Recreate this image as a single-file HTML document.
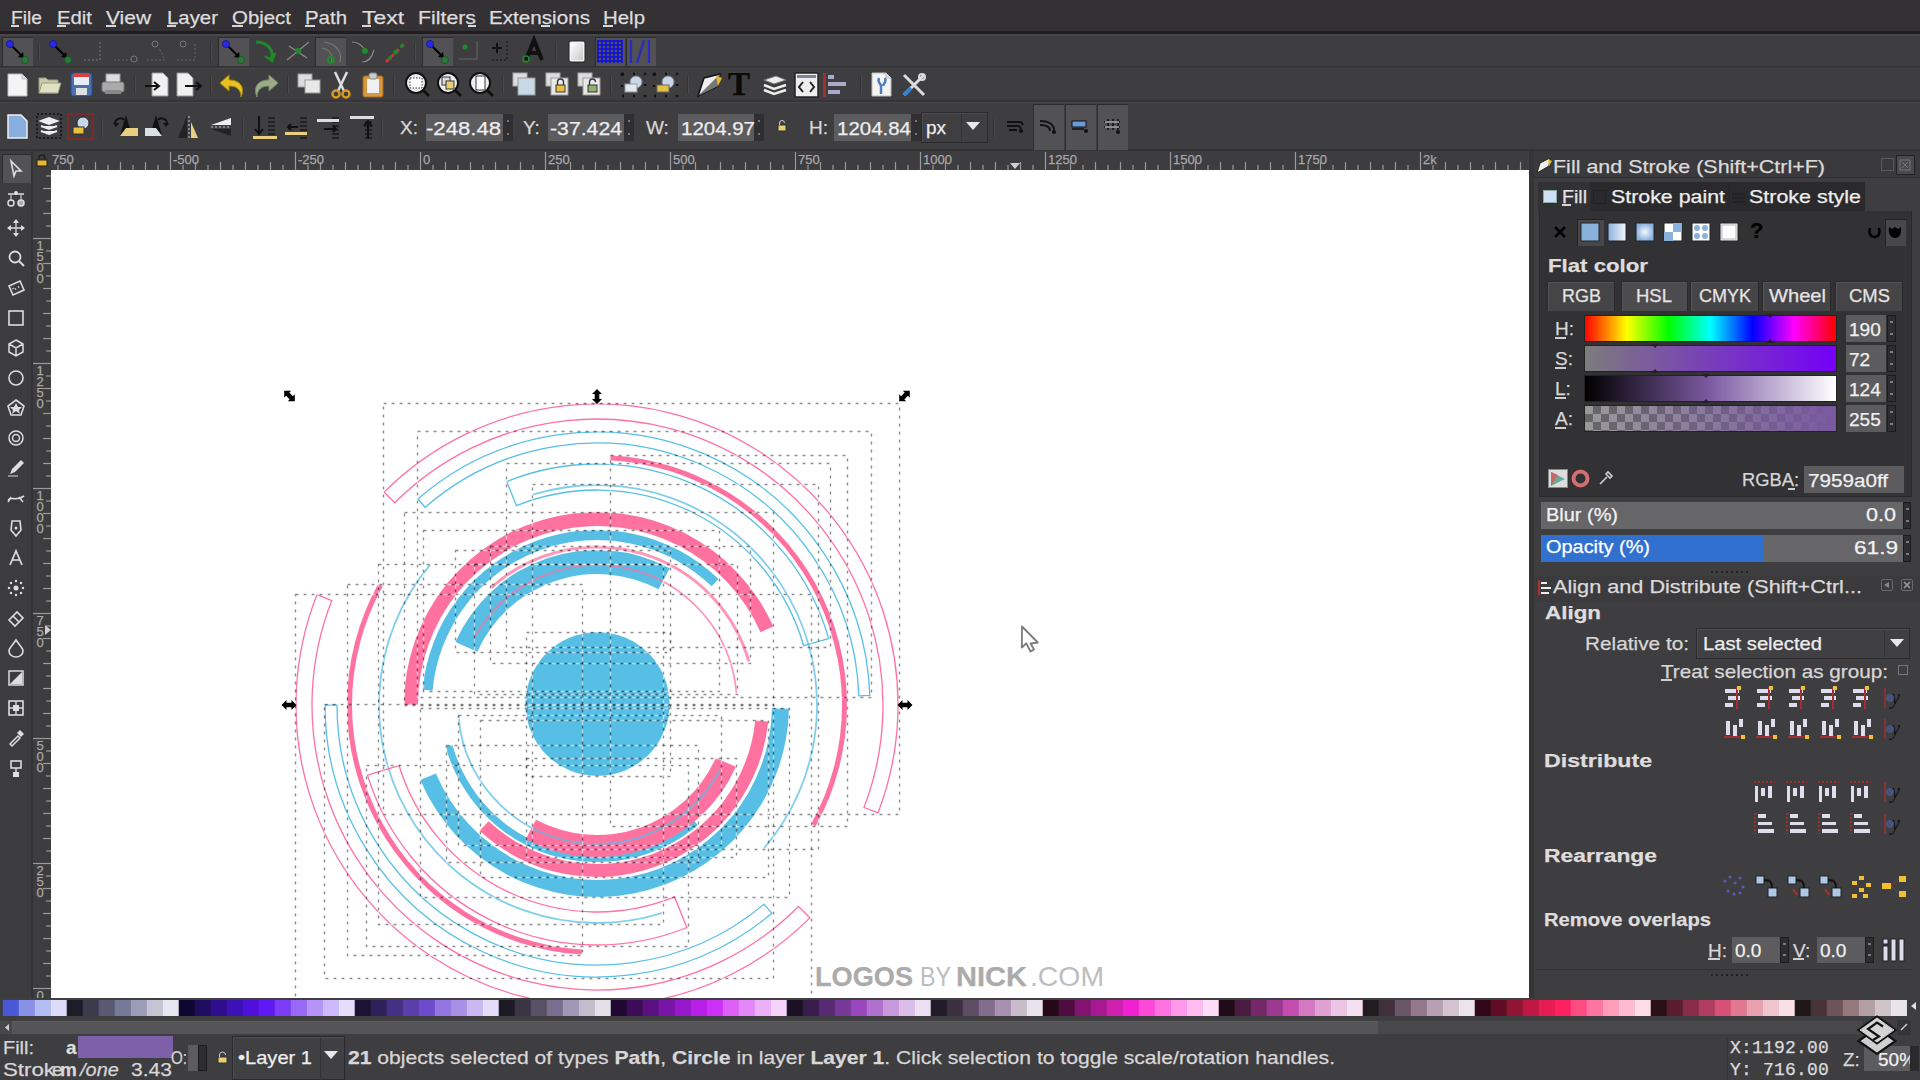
<!DOCTYPE html><html><head><meta charset="utf-8"><style>
*{margin:0;padding:0;box-sizing:border-box}
html,body{width:1920px;height:1080px;overflow:hidden;background:#3e3d40;font-family:"Liberation Sans",sans-serif;color:#dcdcdc}
.a{position:absolute}
.t{position:absolute;white-space:nowrap;line-height:1;-webkit-text-stroke:0.25px currentColor}
svg{position:absolute;overflow:visible}
</style></head><body><div id="root" style="position:absolute;left:0;top:0;width:1920px;height:1080px;overflow:hidden">
<div class="a" style="left:0px;top:0px;width:1920px;height:33px;background:#333134;"></div><div class="a" style="left:0px;top:31px;width:1920px;height:3px;background:#1f1d20;"></div><div class="a" style="left:0px;top:34px;width:1920px;height:2px;background:#464548;"></div><div class="t" style="left:11px;top:7.5px;font-size:19px;color:#dedcdc;font-weight:normal;transform:scaleX(1.0125);transform-origin:0 0;">File</div><div class="t" style="left:57px;top:7.5px;font-size:19px;color:#dedcdc;font-weight:normal;transform:scaleX(1.0690);transform-origin:0 0;">Edit</div><div class="t" style="left:106px;top:7.5px;font-size:19px;color:#dedcdc;font-weight:normal;transform:scaleX(1.1018);transform-origin:0 0;">View</div><div class="t" style="left:167px;top:7.5px;font-size:19px;color:#dedcdc;font-weight:normal;transform:scaleX(1.0730);transform-origin:0 0;">Layer</div><div class="t" style="left:232px;top:7.5px;font-size:19px;color:#dedcdc;font-weight:normal;transform:scaleX(1.0744);transform-origin:0 0;">Object</div><div class="t" style="left:305px;top:7.5px;font-size:19px;color:#dedcdc;font-weight:normal;transform:scaleX(1.0745);transform-origin:0 0;">Path</div><div class="t" style="left:362px;top:7.5px;font-size:19px;color:#dedcdc;font-weight:normal;transform:scaleX(1.2053);transform-origin:0 0;">Text</div><div class="t" style="left:418px;top:7.5px;font-size:19px;color:#dedcdc;font-weight:normal;transform:scaleX(1.1214);transform-origin:0 0;">Filters</div><div class="t" style="left:489px;top:7.5px;font-size:19px;color:#dedcdc;font-weight:normal;transform:scaleX(1.0867);transform-origin:0 0;">Extensions</div><div class="t" style="left:603px;top:7.5px;font-size:19px;color:#dedcdc;font-weight:normal;transform:scaleX(1.0748);transform-origin:0 0;">Help</div><div class="a" style="left:11px;top:25px;width:8px;height:2px;background:#d8d6d6;"></div><div class="a" style="left:57px;top:25px;width:9px;height:2px;background:#d8d6d6;"></div><div class="a" style="left:106px;top:25px;width:10px;height:2px;background:#d8d6d6;"></div><div class="a" style="left:167px;top:25px;width:9px;height:2px;background:#d8d6d6;"></div><div class="a" style="left:232px;top:25px;width:11px;height:2px;background:#d8d6d6;"></div><div class="a" style="left:305px;top:25px;width:10px;height:2px;background:#d8d6d6;"></div><div class="a" style="left:362px;top:25px;width:9px;height:2px;background:#d8d6d6;"></div><div class="a" style="left:468px;top:25px;width:8px;height:2px;background:#d8d6d6;"></div><div class="a" style="left:541px;top:25px;width:9px;height:2px;background:#d8d6d6;"></div><div class="a" style="left:603px;top:25px;width:10px;height:2px;background:#d8d6d6;"></div><div class="a" style="left:0px;top:66px;width:1920px;height:2px;background:#353436;"></div><div class="a" style="left:0px;top:68px;width:1920px;height:1px;background:#464548;"></div><div class="a" style="left:0px;top:100px;width:1920px;height:2px;background:#353436;"></div><div class="a" style="left:0px;top:102px;width:1920px;height:1px;background:#464548;"></div><div class="a" style="left:0px;top:149px;width:1920px;height:2px;background:#333235;"></div><div class="a" style="left:2px;top:37px;width:31px;height:29px;background:#525154;border-top:1px solid #2c2b2e;border-left:1px solid #2c2b2e;"></div><svg style="left:5px;top:39px;" width="26" height="26" viewBox="0 0 26 26"><line x1="5" y1="5" x2="17" y2="17" stroke="#000" stroke-width="2"/><path d="M13 18 L19 19 L18 13z" fill="#000"/><circle cx="5" cy="5" r="3.5" fill="#2a2ae0" stroke="#1818a0"/><circle cx="20" cy="21" r="3.5" fill="#2a7a3a" stroke="#1a5a2a"/></svg><div class="a" style="left:38px;top:42px;width:1px;height:20px;background:#333235;"></div><div class="a" style="left:39px;top:42px;width:1px;height:20px;background:#4a494c;"></div><svg style="left:48px;top:39px;" width="26" height="26" viewBox="0 0 26 26"><line x1="5" y1="5" x2="17" y2="17" stroke="#000" stroke-width="2"/><path d="M13 18 L19 19 L18 13z" fill="#000"/><circle cx="5" cy="5" r="3.5" fill="#2a2ae0" stroke="#1818a0"/><circle cx="20" cy="21" r="3.5" fill="#2a7a3a" stroke="#1a5a2a"/></svg><svg style="left:80px;top:40px;" width="24" height="24" viewBox="0 0 24 24"><path d="M20 2 V20 H2" stroke="#777" stroke-width="1" stroke-dasharray="2 2" fill="none"/></svg><svg style="left:112px;top:40px;" width="28" height="24" viewBox="0 0 28 24"><path d="M2 20 H22" stroke="#666" stroke-dasharray="2 2"/><circle cx="22" cy="19" r="3" fill="none" stroke="#777"/></svg><svg style="left:145px;top:38px;" width="24" height="26" viewBox="0 0 24 26"><circle cx="10" cy="6" r="3" fill="none" stroke="#777"/><path d="M2 22 H20 L14 10" stroke="#666" stroke-dasharray="2 2" fill="none"/></svg><svg style="left:175px;top:38px;" width="24" height="26" viewBox="0 0 24 26"><circle cx="8" cy="6" r="3" fill="none" stroke="#777"/><path d="M2 22 H20 V6" stroke="#666" stroke-dasharray="2 2" fill="none"/></svg><div class="a" style="left:210px;top:42px;width:1px;height:20px;background:#333235;"></div><div class="a" style="left:211px;top:42px;width:1px;height:20px;background:#4a494c;"></div><div class="a" style="left:218px;top:37px;width:31px;height:29px;background:#525154;border-top:1px solid #2c2b2e;border-left:1px solid #2c2b2e;"></div><svg style="left:221px;top:39px;" width="26" height="26" viewBox="0 0 26 26"><line x1="5" y1="5" x2="17" y2="17" stroke="#000" stroke-width="2"/><path d="M13 18 L19 19 L18 13z" fill="#000"/><circle cx="5" cy="5" r="3.5" fill="#2a2ae0" stroke="#1818a0"/><circle cx="20" cy="21" r="3.5" fill="#2a7a3a" stroke="#1a5a2a"/></svg><svg style="left:253px;top:38px;" width="26" height="26" viewBox="0 0 26 26"><path d="M3 4 C14 4 22 12 18 22" stroke="#1f8a2a" stroke-width="3" fill="none"/><path d="M12 18 L19 23 L22 15" stroke="#1f8a2a" stroke-width="2.5" fill="none"/></svg><svg style="left:285px;top:38px;" width="26" height="26" viewBox="0 0 26 26"><path d="M2 22 L24 4 M4 8 L22 20" stroke="#8a8a8a" stroke-width="1.2" fill="none"/><circle cx="13" cy="13" r="3" fill="#1f8a2a"/></svg><div class="a" style="left:315px;top:37px;width:31px;height:29px;background:#525154;border-top:1px solid #2c2b2e;border-left:1px solid #2c2b2e;"></div><svg style="left:318px;top:38px;" width="26" height="26" viewBox="0 0 26 26"><path d="M6 4 C20 6 24 16 22 24 M4 10 C14 12 16 20 12 26" stroke="#777" stroke-width="1.2" fill="none"/><circle cx="13" cy="22" r="3" fill="none" stroke="#1f8a2a" stroke-width="2"/></svg><svg style="left:350px;top:38px;" width="26" height="26" viewBox="0 0 26 26"><path d="M2 4 C10 4 14 10 16 14 M24 12 C22 20 18 24 12 24" stroke="#8a8a8a" stroke-width="1.2" fill="none"/><circle cx="15" cy="13" r="3" fill="#1f8a2a"/></svg><svg style="left:382px;top:38px;" width="26" height="26" viewBox="0 0 26 26"><path d="M4 24 L24 4" stroke="#d03030" stroke-width="3" stroke-dasharray="4 3" fill="none"/><circle cx="14" cy="14" r="2.5" fill="#1f8a2a"/><circle cx="8" cy="20" r="2" fill="#1f8a2a"/><circle cx="20" cy="8" r="2" fill="#1f8a2a"/></svg><div class="a" style="left:414px;top:42px;width:1px;height:20px;background:#333235;"></div><div class="a" style="left:415px;top:42px;width:1px;height:20px;background:#4a494c;"></div><div class="a" style="left:422px;top:37px;width:31px;height:29px;background:#525154;border-top:1px solid #2c2b2e;border-left:1px solid #2c2b2e;"></div><svg style="left:425px;top:39px;" width="26" height="26" viewBox="0 0 26 26"><line x1="5" y1="5" x2="17" y2="17" stroke="#000" stroke-width="2"/><path d="M13 18 L19 19 L18 13z" fill="#000"/><circle cx="5" cy="5" r="3.5" fill="#2a2ae0" stroke="#1818a0"/><circle cx="20" cy="21" r="3.5" fill="#2a7a3a" stroke="#1a5a2a"/></svg><svg style="left:457px;top:39px;" width="22" height="22" viewBox="0 0 22 22"><path d="M20 2 V20 H2" stroke="#666" fill="none"/><circle cx="8" cy="8" r="2.5" fill="#1f8a2a"/></svg><svg style="left:489px;top:39px;" width="22" height="24" viewBox="0 0 22 24"><path d="M3 9 H13 M8 4 V14" stroke="#111" stroke-width="2"/><path d="M18 2 V21 H2" stroke="#111" stroke-dasharray="2 2" fill="none"/></svg><svg style="left:522px;top:38px;" width="26" height="26" viewBox="0 0 26 26"><path d="M4 22 L12 2 L20 22 M7 15 H17" stroke="#111" stroke-width="4" fill="none"/><circle cx="4" cy="21" r="3" fill="none" stroke="#1f8a2a" stroke-width="1.5"/></svg><div class="a" style="left:555px;top:42px;width:1px;height:20px;background:#333235;"></div><div class="a" style="left:556px;top:42px;width:1px;height:20px;background:#4a494c;"></div><svg style="left:568px;top:40px;" width="18" height="23" viewBox="0 0 18 23"><rect x="1" y="1" width="16" height="21" rx="2" fill="#f2f2f2" stroke="#222"/><rect x="3" y="3" width="12" height="17" fill="url(#pg)"/><defs><linearGradient id="pg" x1="0" y1="0" x2="1" y2="1"><stop offset="0" stop-color="#fff"/><stop offset="1" stop-color="#c8c8c8"/></linearGradient></defs></svg><div class="a" style="left:595px;top:37px;width:30px;height:29px;background:#525154;border-top:1px solid #2c2b2e;border-left:1px solid #2c2b2e;"></div><svg style="left:597px;top:40px;" width="25" height="23" viewBox="0 0 25 23"><line x1="1" y1="0" x2="1" y2="23" stroke="#1010e0" stroke-width="1.6"/><line x1="5" y1="0" x2="5" y2="23" stroke="#1010e0" stroke-width="1.6"/><line x1="9" y1="0" x2="9" y2="23" stroke="#1010e0" stroke-width="1.6"/><line x1="13" y1="0" x2="13" y2="23" stroke="#1010e0" stroke-width="1.6"/><line x1="17" y1="0" x2="17" y2="23" stroke="#1010e0" stroke-width="1.6"/><line x1="21" y1="0" x2="21" y2="23" stroke="#1010e0" stroke-width="1.6"/><line x1="25" y1="0" x2="25" y2="23" stroke="#1010e0" stroke-width="1.6"/><line x1="0" y1="1" x2="25" y2="1" stroke="#1010e0" stroke-width="1.6"/><line x1="0" y1="5" x2="25" y2="5" stroke="#1010e0" stroke-width="1.6"/><line x1="0" y1="9" x2="25" y2="9" stroke="#1010e0" stroke-width="1.6"/><line x1="0" y1="13" x2="25" y2="13" stroke="#1010e0" stroke-width="1.6"/><line x1="0" y1="17" x2="25" y2="17" stroke="#1010e0" stroke-width="1.6"/><line x1="0" y1="21" x2="25" y2="21" stroke="#1010e0" stroke-width="1.6"/></svg><div class="a" style="left:626px;top:37px;width:30px;height:29px;background:#525154;border-top:1px solid #2c2b2e;border-left:1px solid #2c2b2e;"></div><svg style="left:628px;top:40px;" width="26" height="23" viewBox="0 0 26 23"><path d="M3 0 V23 M21 0 V23 M16 0 L9 23" stroke="#2a2ac0" stroke-width="2.2"/></svg><svg style="left:7px;top:73px;" width="21" height="24" viewBox="0 0 21 24"><path d="M1 1 H15 L20 6 V23 H1z" fill="#f4f4f4" stroke="#bbb"/><path d="M15 1 V6 H20" fill="#ddd" stroke="#bbb"/></svg><svg style="left:38px;top:74px;" width="23" height="21" viewBox="0 0 23 21"><path d="M1 4 H8 L10 6 H20 V19 H1z" fill="#c9c9a8" stroke="#9a9a80"/><path d="M1 19 L4 9 H23 L20 19z" fill="#e0e0c4" stroke="#9a9a80"/></svg><svg style="left:70px;top:72px;" width="23" height="25" viewBox="0 0 23 25"><rect x="1" y="1" width="21" height="23" rx="2" fill="#4a70b0" stroke="#2a4a80"/><rect x="4" y="1" width="15" height="4" fill="#d84040"/><rect x="4" y="5" width="15" height="8" fill="#e8eef8"/><rect x="6" y="16" width="11" height="7" fill="#e0e0e0"/></svg><svg style="left:101px;top:73px;" width="24" height="23" viewBox="0 0 24 23"><rect x="5" y="1" width="14" height="9" fill="#ddd" stroke="#999"/><rect x="1" y="9" width="22" height="10" rx="2" fill="#aaa" stroke="#777"/><rect x="4" y="17" width="16" height="4" fill="#888"/></svg><div class="a" style="left:134px;top:76px;width:1px;height:18px;background:#333235;"></div><div class="a" style="left:135px;top:76px;width:1px;height:18px;background:#4a494c;"></div><svg style="left:144px;top:72px;" width="26" height="25" viewBox="0 0 26 25"><path d="M8 1 H19 L24 6 V24 H8z" fill="#f0f0f0" stroke="#999"/><path d="M1 14 H14 M10 10 L15 14 L10 18" stroke="#111" stroke-width="2" fill="none"/></svg><svg style="left:176px;top:72px;" width="26" height="25" viewBox="0 0 26 25"><path d="M1 1 H12 L17 6 V24 H1z" fill="#f0f0f0" stroke="#999"/><path d="M9 14 H24 M20 10 L25 14 L20 18" stroke="#111" stroke-width="2" fill="none"/></svg><div class="a" style="left:210px;top:76px;width:1px;height:18px;background:#333235;"></div><div class="a" style="left:211px;top:76px;width:1px;height:18px;background:#4a494c;"></div><svg style="left:219px;top:72px;" width="27" height="27" viewBox="0 0 27 27"><path d="M10 3 L1 11 L10 19 V14 C17 14 22 17 22 25 C26 16 22 8 10 8z" fill="#e8c020" stroke="#a88a10"/></svg><svg style="left:252px;top:72px;" width="27" height="27" viewBox="0 0 27 27"><path d="M17 3 L26 11 L17 19 V14 C10 14 5 17 5 25 C1 16 5 8 17 8z" fill="#9aac88" stroke="#7a8a6a"/></svg><div class="a" style="left:287px;top:76px;width:1px;height:18px;background:#333235;"></div><div class="a" style="left:288px;top:76px;width:1px;height:18px;background:#4a494c;"></div><svg style="left:297px;top:73px;" width="25" height="22" viewBox="0 0 25 22"><rect x="1" y="1" width="14" height="13" fill="#ddd" stroke="#999"/><rect x="8" y="7" width="15" height="13" fill="#e8e8e8" stroke="#999"/></svg><svg style="left:331px;top:71px;" width="20" height="28" viewBox="0 0 20 28"><path d="M4 1 L13 20 M16 1 L7 20" stroke="#ddd" stroke-width="2.5"/><circle cx="5" cy="23" r="3.5" fill="none" stroke="#d89a20" stroke-width="2.5"/><circle cx="15" cy="23" r="3.5" fill="none" stroke="#d89a20" stroke-width="2.5"/></svg><svg style="left:362px;top:72px;" width="22" height="26" viewBox="0 0 22 26"><rect x="1" y="4" width="20" height="21" rx="2" fill="#d89840" stroke="#a86a20"/><rect x="5" y="7" width="12" height="14" fill="#f0f0f0"/><rect x="7" y="1" width="8" height="6" rx="2" fill="#ccc" stroke="#888"/></svg><div class="a" style="left:393px;top:76px;width:1px;height:18px;background:#333235;"></div><div class="a" style="left:394px;top:76px;width:1px;height:18px;background:#4a494c;"></div><svg style="left:405px;top:72px;" width="26" height="26" viewBox="0 0 26 26"><circle cx="11" cy="11" r="10" fill="#eee" stroke="#111" stroke-width="2"/><rect x="5" y="6" width="12" height="10" fill="#fff" stroke="#333" stroke-dasharray="1.5 1.5"/><path d="M18 18 L24 24" stroke="#111" stroke-width="3"/></svg><svg style="left:437px;top:72px;" width="26" height="26" viewBox="0 0 26 26"><circle cx="11" cy="11" r="10" fill="#eee" stroke="#111" stroke-width="2"/><rect x="5" y="5" width="8" height="8" fill="#ddd" stroke="#333"/><rect x="9" y="9" width="8" height="8" fill="#e8d070" stroke="#333"/><path d="M18 18 L24 24" stroke="#111" stroke-width="3"/></svg><svg style="left:469px;top:72px;" width="26" height="26" viewBox="0 0 26 26"><circle cx="11" cy="11" r="10" fill="#eee" stroke="#111" stroke-width="2"/><rect x="7" y="4" width="9" height="14" fill="#fff" stroke="#333"/><path d="M18 18 L24 24" stroke="#111" stroke-width="3"/></svg><div class="a" style="left:502px;top:76px;width:1px;height:18px;background:#333235;"></div><div class="a" style="left:503px;top:76px;width:1px;height:18px;background:#4a494c;"></div><svg style="left:512px;top:72px;" width="25" height="25" viewBox="0 0 25 25"><rect x="1" y="1" width="14" height="13" fill="#ddd" stroke="#aaa"/><rect x="6" y="6" width="17" height="17" fill="#c8d8e8" stroke="#999"/></svg><svg style="left:545px;top:72px;" width="25" height="25" viewBox="0 0 25 25"><rect x="1" y="1" width="14" height="13" fill="#ddd" stroke="#aaa"/><rect x="6" y="6" width="17" height="17" fill="#e8e8e8" stroke="#999"/><rect x="11" y="13" width="9" height="7" fill="#e8c040" stroke="#333"/><path d="M12.5 13 V10 a3 3 0 0 1 6 0 V13" fill="none" stroke="#333" stroke-width="1.3"/></svg><svg style="left:577px;top:72px;" width="25" height="25" viewBox="0 0 25 25"><rect x="1" y="1" width="14" height="13" fill="#ddd" stroke="#aaa"/><rect x="6" y="6" width="17" height="17" fill="#e8e8e8" stroke="#999"/><rect x="11" y="13" width="9" height="7" fill="#90b070" stroke="#333"/><path d="M12.5 13 V10 a3 3 0 0 1 6 0" fill="none" stroke="#333" stroke-width="1.3"/></svg><div class="a" style="left:610px;top:76px;width:1px;height:18px;background:#333235;"></div><div class="a" style="left:611px;top:76px;width:1px;height:18px;background:#4a494c;"></div><svg style="left:620px;top:72px;" width="27" height="26" viewBox="0 0 27 26"><path d="M2 2 H25 V24 H2z" fill="none" stroke="#111" stroke-width="2.5" stroke-dasharray="2 9"/><circle cx="16" cy="10" r="6" fill="#c8d8e8" stroke="#888"/><rect x="5" y="12" width="12" height="8" fill="#e0e8f0" stroke="#999"/></svg><svg style="left:652px;top:72px;" width="27" height="26" viewBox="0 0 27 26"><path d="M2 2 H25 V24 H2z" fill="none" stroke="#111" stroke-width="2.5" stroke-dasharray="2 9"/><circle cx="16" cy="10" r="6" fill="#c8d8e8" stroke="#888"/><rect x="5" y="13" width="12" height="7" fill="#e8c040" stroke="#666"/></svg><div class="a" style="left:687px;top:76px;width:1px;height:18px;background:#333235;"></div><div class="a" style="left:688px;top:76px;width:1px;height:18px;background:#4a494c;"></div><svg style="left:696px;top:72px;" width="27" height="26" viewBox="0 0 27 26"><path d="M2 24 L8 6 L24 2 L22 14z" fill="#eee" stroke="#111" stroke-width="1.5"/><path d="M2 24 L22 14 L24 2" fill="#777"/><path d="M20 4 L26 6 L22 14z" fill="#e8b820"/></svg><div class="t" style="left:728px;top:68px;font-size:33px;font-family:'Liberation Serif',serif;color:#0a0a0a;font-weight:bold">T</div><svg style="left:762px;top:74px;" width="25" height="22" viewBox="0 0 25 22"><path d="M2 6 L14 2 L24 6 L12 10z" fill="#eee" stroke="#777"/><path d="M2 11 L12 15 L24 11" fill="none" stroke="#eee" stroke-width="2.5"/><path d="M2 16 L12 20 L24 16" fill="none" stroke="#eee" stroke-width="2.5"/></svg><svg style="left:794px;top:72px;" width="25" height="26" viewBox="0 0 25 26"><rect x="1" y="1" width="23" height="24" fill="#eee" stroke="#222" stroke-width="1.5"/><rect x="3" y="3" width="19" height="3" fill="#789"/><path d="M9 10 L5 15 L9 20 M16 10 L20 15 L16 20" stroke="#222" stroke-width="2" fill="none"/></svg><svg style="left:822px;top:72px;" width="27" height="26" viewBox="0 0 27 26"><rect x="1" y="1" width="3" height="24" fill="#a03030"/><rect x="6" y="3" width="6" height="4" fill="#aac" /><rect x="6" y="10" width="18" height="4" fill="#aac"/><rect x="6" y="18" width="12" height="4" fill="#aac"/></svg><div class="a" style="left:860px;top:76px;width:1px;height:18px;background:#333235;"></div><div class="a" style="left:861px;top:76px;width:1px;height:18px;background:#4a494c;"></div><svg style="left:871px;top:72px;" width="22" height="26" viewBox="0 0 22 26"><path d="M1 1 H15 L20 6 V24 H1z" fill="#f4f4f4" stroke="#bbb"/><path d="M15 1 V6 H20" fill="#ddd" stroke="#bbb"/><path d="M8 6 C6 10 10 12 10 14 V22 M14 6 C16 10 12 12 12 14" stroke="#4a80c0" stroke-width="2.5" fill="none"/></svg><svg style="left:901px;top:72px;" width="26" height="26" viewBox="0 0 26 26"><path d="M3 3 L23 23 M23 3 L3 23" stroke="#ddd" stroke-width="3"/><path d="M3 23 L10 16" stroke="#3a80d0" stroke-width="4"/><circle cx="21" cy="5" r="3" fill="none" stroke="#ddd" stroke-width="2"/></svg><svg style="left:7px;top:114px;" width="21" height="25" viewBox="0 0 21 25"><path d="M1 1 H14 L20 7 V24 H1z" fill="#88aee0" stroke="#eee" stroke-width="1.5"/></svg><svg style="left:36px;top:113px;" width="26" height="26" viewBox="0 0 26 26"><rect x="1" y="1" width="24" height="24" fill="none" stroke="#111" stroke-width="1.5" stroke-dasharray="2 2"/><path d="M5 8 L13 5 L21 8 L13 11z M5 13 L13 16 L21 13 M5 18 L13 21 L21 18" fill="#eee" stroke="#eee" stroke-width="2"/></svg><svg style="left:67px;top:113px;" width="27" height="27" viewBox="0 0 27 27"><rect x="1" y="1" width="25" height="25" fill="none" stroke="#7a2a2a" stroke-width="2"/><circle cx="16" cy="10" r="6" fill="#c8d8e8" stroke="#333"/><rect x="6" y="14" width="11" height="7" fill="#e8c040" stroke="#333"/></svg><div class="a" style="left:101px;top:118px;width:1px;height:20px;background:#333235;"></div><div class="a" style="left:102px;top:118px;width:1px;height:20px;background:#4a494c;"></div><svg style="left:112px;top:114px;" width="27" height="26" viewBox="0 0 27 26"><path d="M14 1 L8 22 H20z" fill="#111"/><path d="M14 14 L26 14 L26 22 L8 22z" fill="#e8d080"/><path d="M3 10 C3 4 10 3 12 6" stroke="#111" stroke-width="2" fill="none"/><path d="M1 9 L4 13 L7 9" fill="#111"/></svg><svg style="left:144px;top:114px;" width="27" height="26" viewBox="0 0 27 26"><path d="M12 1 L18 22 H6z" fill="#111"/><path d="M12 14 L1 14 L1 22 L18 22z" fill="#d8e0e8"/><path d="M23 10 C23 4 16 3 14 6" stroke="#111" stroke-width="2" fill="none"/><path d="M19 9 L22 13 L25 9" fill="#111"/></svg><svg style="left:177px;top:114px;" width="22" height="26" viewBox="0 0 22 26"><path d="M10 2 V24 L1 24z" fill="#222"/><path d="M12 2 V24" stroke="#ccc" stroke-dasharray="2 2"/><path d="M14 8 L21 24 H14z" fill="#e8d080"/></svg><svg style="left:209px;top:116px;" width="24" height="22" viewBox="0 0 24 22"><path d="M22 2 L2 9 H22z" fill="#eee"/><path d="M2 11 H22" stroke="#ccc" stroke-dasharray="2 2"/><path d="M2 13 H22 V20z" fill="#222"/></svg><div class="a" style="left:242px;top:118px;width:1px;height:20px;background:#333235;"></div><div class="a" style="left:243px;top:118px;width:1px;height:20px;background:#4a494c;"></div><svg style="left:252px;top:115px;" width="26" height="26" viewBox="0 0 26 26"><rect x="16" y="2" width="7" height="2" fill="#222"/><rect x="16" y="6" width="7" height="2" fill="#222"/><rect x="16" y="10" width="7" height="2" fill="#222"/><rect x="16" y="14" width="7" height="2" fill="#222"/><rect x="16" y="18" width="7" height="2" fill="#222"/><rect x="16" y="22" width="7" height="2" fill="#222"/><path d="M7 1 V18 M3 14 L7 19 L11 14" stroke="#111" stroke-width="2" fill="none"/><rect x="1" y="21" width="24" height="3" fill="#e8d080"/></svg><svg style="left:284px;top:115px;" width="26" height="26" viewBox="0 0 26 26"><rect x="16" y="2" width="7" height="2" fill="#222"/><rect x="16" y="6" width="7" height="2" fill="#222"/><rect x="16" y="10" width="7" height="2" fill="#222"/><rect x="16" y="14" width="7" height="2" fill="#222"/><rect x="16" y="18" width="7" height="2" fill="#222"/><rect x="16" y="22" width="7" height="2" fill="#222"/><path d="M4 12 H14 M7 9 L4 12 L7 15" stroke="#111" stroke-width="2" fill="none"/><rect x="1" y="17" width="22" height="3" fill="#e8d080"/></svg><svg style="left:316px;top:115px;" width="26" height="26" viewBox="0 0 26 26"><rect x="16" y="2" width="7" height="2" fill="#222"/><rect x="16" y="6" width="7" height="2" fill="#222"/><rect x="16" y="10" width="7" height="2" fill="#222"/><rect x="16" y="14" width="7" height="2" fill="#222"/><rect x="16" y="18" width="7" height="2" fill="#222"/><rect x="16" y="22" width="7" height="2" fill="#222"/><rect x="1" y="4" width="22" height="3" fill="#ddd"/><path d="M8 14 H20 M17 11 L20 14 L17 17" stroke="#111" stroke-width="2" fill="none"/></svg><svg style="left:349px;top:115px;" width="26" height="26" viewBox="0 0 26 26"><rect x="16" y="2" width="7" height="2" fill="#222"/><rect x="16" y="6" width="7" height="2" fill="#222"/><rect x="16" y="10" width="7" height="2" fill="#222"/><rect x="16" y="14" width="7" height="2" fill="#222"/><rect x="16" y="18" width="7" height="2" fill="#222"/><rect x="16" y="22" width="7" height="2" fill="#222"/><rect x="1" y="1" width="24" height="3" fill="#ddd"/><path d="M19 24 V7 M15 11 L19 6 L23 11" stroke="#111" stroke-width="2" fill="none"/></svg><div class="a" style="left:381px;top:118px;width:1px;height:20px;background:#333235;"></div><div class="a" style="left:382px;top:118px;width:1px;height:20px;background:#4a494c;"></div><div class="t" style="left:400px;top:118px;font-size:19px;color:#d8d6d6;font-weight:normal;">X:</div><div class="a" style="left:426px;top:114px;width:77px;height:27px;background:#5c5b5e;"></div><div class="a" style="left:503px;top:114px;width:10px;height:27px;background:#2f2e31;"></div><div class="a" style="left:507px;top:120px;width:2px;height:2px;background:#777;"></div><div class="a" style="left:507px;top:133px;width:2px;height:2px;background:#777;"></div><div class="t" style="left:426px;top:118.5px;font-size:19px;color:#eeeeee;font-weight:normal;transform:scaleX(1.1638);transform-origin:0 0;">-248.48</div><div class="t" style="left:523px;top:118px;font-size:19px;color:#d8d6d6;font-weight:normal;">Y:</div><div class="a" style="left:548px;top:114px;width:76px;height:27px;background:#5c5b5e;"></div><div class="a" style="left:624px;top:114px;width:10px;height:27px;background:#2f2e31;"></div><div class="a" style="left:628px;top:120px;width:2px;height:2px;background:#777;"></div><div class="a" style="left:628px;top:133px;width:2px;height:2px;background:#777;"></div><div class="t" style="left:550px;top:118.5px;font-size:19px;color:#eeeeee;font-weight:normal;transform:scaleX(1.1173);transform-origin:0 0;">-37.424</div><div class="t" style="left:646px;top:118px;font-size:19px;color:#d8d6d6;font-weight:normal;">W:</div><div class="a" style="left:678px;top:114px;width:76px;height:27px;background:#5c5b5e;"></div><div class="a" style="left:754px;top:114px;width:10px;height:27px;background:#2f2e31;"></div><div class="a" style="left:758px;top:120px;width:2px;height:2px;background:#777;"></div><div class="a" style="left:758px;top:133px;width:2px;height:2px;background:#777;"></div><div class="t" style="left:681px;top:118.5px;font-size:19px;color:#eeeeee;font-weight:normal;transform:scaleX(1.0774);transform-origin:0 0;">1204.97</div><svg style="left:777px;top:120px;" width="10" height="12" viewBox="0 0 10 12"><rect x="1" y="5" width="8" height="6" fill="#e8d070" stroke="#333"/><path d="M2.5 5 V3 a2.5 2.5 0 0 1 5 0" fill="none" stroke="#ccc"/></svg><div class="t" style="left:809px;top:118px;font-size:19px;color:#d8d6d6;font-weight:normal;">H:</div><div class="a" style="left:834px;top:114px;width:77px;height:27px;background:#5c5b5e;"></div><div class="a" style="left:911px;top:114px;width:10px;height:27px;background:#2f2e31;"></div><div class="a" style="left:915px;top:120px;width:2px;height:2px;background:#777;"></div><div class="a" style="left:915px;top:133px;width:2px;height:2px;background:#777;"></div><div class="t" style="left:837px;top:118.5px;font-size:19px;color:#eeeeee;font-weight:normal;transform:scaleX(1.0774);transform-origin:0 0;">1204.84</div><div class="a" style="left:921px;top:112px;width:67px;height:31px;background:#3f3e41;border:1px solid #2a292c;box-shadow:inset 1px 1px 0 #4c4b4e;"></div><div class="a" style="left:961px;top:114px;width:1px;height:27px;background:#333;"></div><div class="t" style="left:926px;top:118px;font-size:19px;color:#eeeeee;font-weight:normal;">px</div><svg style="left:965px;top:120px;" width="16" height="12" viewBox="0 0 16 12"><path d="M1 2 H15 L8 10z" fill="#e8e8e8"/></svg><div class="a" style="left:993px;top:118px;width:1px;height:20px;background:#333235;"></div><div class="a" style="left:994px;top:118px;width:1px;height:20px;background:#4a494c;"></div><svg style="left:1005px;top:116px;" width="20" height="20" viewBox="0 0 20 20"><path d="M2 6 H16 L18 9 M2 10 H14 L16 13 M4 14 H12" stroke="#111" stroke-width="2" fill="none"/><circle cx="16" cy="15" r="2" fill="#111"/></svg><div class="a" style="left:1033px;top:104px;width:31px;height:46px;background:#525154;border-top:1px solid #2c2b2e;border-left:1px solid #2c2b2e;"></div><svg style="left:1038px;top:116px;" width="20" height="20" viewBox="0 0 20 20"><path d="M2 5 C10 5 16 8 16 14 M2 9 C8 9 12 11 12 15" stroke="#111" stroke-width="2" fill="none"/><circle cx="16" cy="16" r="2" fill="#111"/></svg><div class="a" style="left:1065px;top:104px;width:31px;height:46px;background:#525154;border-top:1px solid #2c2b2e;border-left:1px solid #2c2b2e;"></div><svg style="left:1070px;top:116px;" width="20" height="20" viewBox="0 0 20 20"><rect x="2" y="5" width="14" height="6" fill="#6a9ad8" stroke="#111"/><path d="M2 13 H14" stroke="#111" stroke-width="1.5"/><circle cx="16" cy="15" r="2" fill="#111"/></svg><div class="a" style="left:1097px;top:104px;width:31px;height:46px;background:#525154;border-top:1px solid #2c2b2e;border-left:1px solid #2c2b2e;"></div><svg style="left:1102px;top:116px;" width="20" height="20" viewBox="0 0 20 20"><path d="M2 6 H18 M2 11 H18 M6 3 V14 M11 3 V14 M16 3 V14" stroke="#111" stroke-width="1.6" fill="none"/><path d="M3 6 H17 M3 11 H17" stroke="#fff" stroke-width="1"/><circle cx="16" cy="16" r="2" fill="#111"/></svg><div class="a" style="left:0px;top:151px;width:32px;height:849px;background:#3c3b3e;"></div><div class="a" style="left:31px;top:151px;width:2px;height:849px;background:#333235;"></div><div class="a" style="left:2px;top:154px;width:29px;height:29px;background:#525154;border-top:1px solid #2c2b2e;border-left:1px solid #2c2b2e;"></div><svg style="left:6px;top:158px;" width="20" height="20" viewBox="0 0 20 20"><path d="M5 3 L15 13 L10 13 L8 18z" fill="none" stroke="#ddd" stroke-width="1.6"/></svg><svg style="left:6px;top:188px;" width="20" height="20" viewBox="0 0 20 20"><path d="M2 6 H18" stroke="#ddd" stroke-width="1.5"/><circle cx="10" cy="5" r="2" fill="#ddd"/><path d="M5 6 V13 M15 6 V13" stroke="#ddd"/><circle cx="5" cy="15" r="3" fill="none" stroke="#ddd" stroke-width="1.5"/><circle cx="15" cy="15" r="3" fill="#aaa" stroke="#ddd" stroke-width="1.5"/></svg><svg style="left:6px;top:218px;" width="20" height="20" viewBox="0 0 20 20"><path d="M10 2 L10 18 M2 10 L18 10" stroke="#ddd" stroke-width="1.3"/><path d="M10 1 L7 5 H13z M10 19 L7 15 H13z M1 10 L5 7 V13z M19 10 L15 7 V13z" fill="#ddd"/></svg><svg style="left:6px;top:248px;" width="20" height="20" viewBox="0 0 20 20"><circle cx="9" cy="9" r="5.5" fill="none" stroke="#ddd" stroke-width="1.8"/><path d="M13 13 L18 18" stroke="#ddd" stroke-width="2"/></svg><svg style="left:6px;top:278px;" width="20" height="20" viewBox="0 0 20 20"><path d="M3 8 L14 3 L18 12 L7 17z" fill="none" stroke="#ddd" stroke-width="1.6"/><path d="M6 11 L8 10 M9 10 L10 12 M12 8 L13 10" stroke="#ddd"/></svg><svg style="left:6px;top:308px;" width="20" height="20" viewBox="0 0 20 20"><rect x="3" y="3" width="14" height="14" fill="none" stroke="#ddd" stroke-width="1.6"/></svg><svg style="left:6px;top:338px;" width="20" height="20" viewBox="0 0 20 20"><path d="M10 2 L17 6 V14 L10 18 L3 14 V6z M3 6 L10 10 L17 6 M10 10 V18" fill="none" stroke="#ddd" stroke-width="1.5"/></svg><svg style="left:6px;top:368px;" width="20" height="20" viewBox="0 0 20 20"><circle cx="10" cy="10" r="7" fill="none" stroke="#ddd" stroke-width="1.6"/></svg><svg style="left:6px;top:398px;" width="20" height="20" viewBox="0 0 20 20"><path d="M10 2 L18 8 L15 17 H5 L2 8z" fill="none" stroke="#ddd" stroke-width="1.6"/><path d="M10 5 L12 9 L16 9 L13 12 L14 16 L10 13 L6 16 L7 12 L4 9 L8 9z" fill="#ddd"/></svg><svg style="left:6px;top:428px;" width="20" height="20" viewBox="0 0 20 20"><circle cx="10" cy="10" r="7" fill="none" stroke="#ddd" stroke-width="1.5"/><circle cx="10" cy="10" r="3.5" fill="none" stroke="#ddd" stroke-width="1.5"/></svg><svg style="left:6px;top:458px;" width="20" height="20" viewBox="0 0 20 20"><path d="M4 16 L6 11 L15 2 L18 5 L9 14z" fill="#ddd"/><path d="M2 18 H12" stroke="#ddd"/></svg><svg style="left:6px;top:488px;" width="20" height="20" viewBox="0 0 20 20"><path d="M2 12 C6 8 10 14 18 8" stroke="#ddd" stroke-width="1.6" fill="none"/><path d="M5 9 L2 14 M13 9 L17 14" stroke="#ddd" stroke-width="1.5"/></svg><svg style="left:6px;top:518px;" width="20" height="20" viewBox="0 0 20 20"><path d="M6 3 L14 3 L15 12 L10 18 L5 12z" fill="none" stroke="#ddd" stroke-width="1.6"/><circle cx="10" cy="10" r="1.5" fill="#ddd"/></svg><svg style="left:6px;top:548px;" width="20" height="20" viewBox="0 0 20 20"><path d="M4 17 L10 3 L16 17 M6.5 12 H13.5" stroke="#ddd" stroke-width="1.7" fill="none"/></svg><svg style="left:6px;top:578px;" width="20" height="20" viewBox="0 0 20 20"><circle cx="10" cy="10" r="2.5" fill="#ddd"/><g fill="#ddd"><circle cx="10" cy="3" r="1.2"/><circle cx="10" cy="17" r="1.2"/><circle cx="3" cy="10" r="1.2"/><circle cx="17" cy="10" r="1.2"/><circle cx="5" cy="5" r="1.2"/><circle cx="15" cy="15" r="1.2"/><circle cx="15" cy="5" r="1.2"/><circle cx="5" cy="15" r="1.2"/></g></svg><svg style="left:6px;top:608px;" width="20" height="20" viewBox="0 0 20 20"><path d="M3 12 L11 4 L17 10 L9 18z" fill="none" stroke="#ddd" stroke-width="1.6"/><path d="M7 8 L13 14" stroke="#ddd" stroke-width="1.6"/></svg><svg style="left:6px;top:638px;" width="20" height="20" viewBox="0 0 20 20"><path d="M10 2 C14 8 17 10 17 13 A7 6 0 0 1 3 13 C3 10 6 8 10 2z" fill="none" stroke="#ddd" stroke-width="1.6"/></svg><svg style="left:6px;top:668px;" width="20" height="20" viewBox="0 0 20 20"><rect x="3" y="3" width="14" height="14" fill="none" stroke="#ddd" stroke-width="1.5"/><path d="M4 16 L16 4 V16z" fill="#ddd"/></svg><svg style="left:6px;top:698px;" width="20" height="20" viewBox="0 0 20 20"><rect x="3" y="3" width="14" height="14" fill="none" stroke="#ddd" stroke-width="1.6"/><path d="M10 3 V17 M3 10 H17" stroke="#ddd" stroke-width="1.3"/><rect x="7" y="7" width="6" height="6" fill="#ddd"/></svg><svg style="left:6px;top:728px;" width="20" height="20" viewBox="0 0 20 20"><path d="M4 16 L12 8 L14 10 L6 18z" fill="none" stroke="#ddd" stroke-width="1.5"/><path d="M11 5 L15 9 L18 6 L14 2z" fill="#ddd"/></svg><svg style="left:6px;top:758px;" width="20" height="20" viewBox="0 0 20 20"><rect x="5" y="3" width="10" height="7" fill="none" stroke="#ddd" stroke-width="1.6"/><path d="M10 10 V15" stroke="#ddd" stroke-width="1.5"/><rect x="7" y="14" width="6" height="5" fill="#ddd"/></svg><div class="a" style="left:33px;top:151px;width:1498px;height:19px;background:#3d3c3f;"></div><div class="a" style="left:33px;top:170px;width:18px;height:828px;background:#3d3c3f;"></div><svg style="left:0px;top:0px;" width="1530" height="171" viewBox="0 0 1530 171"><line x1="58.0" y1="165" x2="58.0" y2="170" stroke="#9a999c" stroke-width="1.2"/><line x1="70.5" y1="162" x2="70.5" y2="170" stroke="#9a999c" stroke-width="1.2"/><line x1="83.0" y1="165" x2="83.0" y2="170" stroke="#9a999c" stroke-width="1.2"/><line x1="95.5" y1="162" x2="95.5" y2="170" stroke="#9a999c" stroke-width="1.2"/><line x1="108.0" y1="165" x2="108.0" y2="170" stroke="#9a999c" stroke-width="1.2"/><line x1="120.5" y1="162" x2="120.5" y2="170" stroke="#9a999c" stroke-width="1.2"/><line x1="133.0" y1="165" x2="133.0" y2="170" stroke="#9a999c" stroke-width="1.2"/><line x1="145.5" y1="162" x2="145.5" y2="170" stroke="#9a999c" stroke-width="1.2"/><line x1="158.0" y1="165" x2="158.0" y2="170" stroke="#9a999c" stroke-width="1.2"/><line x1="170.5" y1="152" x2="170.5" y2="170" stroke="#9a999c" stroke-width="1.2"/><line x1="183.0" y1="165" x2="183.0" y2="170" stroke="#9a999c" stroke-width="1.2"/><line x1="195.5" y1="162" x2="195.5" y2="170" stroke="#9a999c" stroke-width="1.2"/><line x1="208.0" y1="165" x2="208.0" y2="170" stroke="#9a999c" stroke-width="1.2"/><line x1="220.5" y1="162" x2="220.5" y2="170" stroke="#9a999c" stroke-width="1.2"/><line x1="233.0" y1="165" x2="233.0" y2="170" stroke="#9a999c" stroke-width="1.2"/><line x1="245.5" y1="162" x2="245.5" y2="170" stroke="#9a999c" stroke-width="1.2"/><line x1="258.0" y1="165" x2="258.0" y2="170" stroke="#9a999c" stroke-width="1.2"/><line x1="270.5" y1="162" x2="270.5" y2="170" stroke="#9a999c" stroke-width="1.2"/><line x1="283.0" y1="165" x2="283.0" y2="170" stroke="#9a999c" stroke-width="1.2"/><line x1="295.5" y1="152" x2="295.5" y2="170" stroke="#9a999c" stroke-width="1.2"/><line x1="308.0" y1="165" x2="308.0" y2="170" stroke="#9a999c" stroke-width="1.2"/><line x1="320.5" y1="162" x2="320.5" y2="170" stroke="#9a999c" stroke-width="1.2"/><line x1="333.0" y1="165" x2="333.0" y2="170" stroke="#9a999c" stroke-width="1.2"/><line x1="345.5" y1="162" x2="345.5" y2="170" stroke="#9a999c" stroke-width="1.2"/><line x1="358.0" y1="165" x2="358.0" y2="170" stroke="#9a999c" stroke-width="1.2"/><line x1="370.5" y1="162" x2="370.5" y2="170" stroke="#9a999c" stroke-width="1.2"/><line x1="383.0" y1="165" x2="383.0" y2="170" stroke="#9a999c" stroke-width="1.2"/><line x1="395.5" y1="162" x2="395.5" y2="170" stroke="#9a999c" stroke-width="1.2"/><line x1="408.0" y1="165" x2="408.0" y2="170" stroke="#9a999c" stroke-width="1.2"/><line x1="420.5" y1="152" x2="420.5" y2="170" stroke="#9a999c" stroke-width="1.2"/><line x1="433.0" y1="165" x2="433.0" y2="170" stroke="#9a999c" stroke-width="1.2"/><line x1="445.5" y1="162" x2="445.5" y2="170" stroke="#9a999c" stroke-width="1.2"/><line x1="458.0" y1="165" x2="458.0" y2="170" stroke="#9a999c" stroke-width="1.2"/><line x1="470.5" y1="162" x2="470.5" y2="170" stroke="#9a999c" stroke-width="1.2"/><line x1="483.0" y1="165" x2="483.0" y2="170" stroke="#9a999c" stroke-width="1.2"/><line x1="495.5" y1="162" x2="495.5" y2="170" stroke="#9a999c" stroke-width="1.2"/><line x1="508.0" y1="165" x2="508.0" y2="170" stroke="#9a999c" stroke-width="1.2"/><line x1="520.5" y1="162" x2="520.5" y2="170" stroke="#9a999c" stroke-width="1.2"/><line x1="533.0" y1="165" x2="533.0" y2="170" stroke="#9a999c" stroke-width="1.2"/><line x1="545.5" y1="152" x2="545.5" y2="170" stroke="#9a999c" stroke-width="1.2"/><line x1="558.0" y1="165" x2="558.0" y2="170" stroke="#9a999c" stroke-width="1.2"/><line x1="570.5" y1="162" x2="570.5" y2="170" stroke="#9a999c" stroke-width="1.2"/><line x1="583.0" y1="165" x2="583.0" y2="170" stroke="#9a999c" stroke-width="1.2"/><line x1="595.5" y1="162" x2="595.5" y2="170" stroke="#9a999c" stroke-width="1.2"/><line x1="608.0" y1="165" x2="608.0" y2="170" stroke="#9a999c" stroke-width="1.2"/><line x1="620.5" y1="162" x2="620.5" y2="170" stroke="#9a999c" stroke-width="1.2"/><line x1="633.0" y1="165" x2="633.0" y2="170" stroke="#9a999c" stroke-width="1.2"/><line x1="645.5" y1="162" x2="645.5" y2="170" stroke="#9a999c" stroke-width="1.2"/><line x1="658.0" y1="165" x2="658.0" y2="170" stroke="#9a999c" stroke-width="1.2"/><line x1="670.5" y1="152" x2="670.5" y2="170" stroke="#9a999c" stroke-width="1.2"/><line x1="683.0" y1="165" x2="683.0" y2="170" stroke="#9a999c" stroke-width="1.2"/><line x1="695.5" y1="162" x2="695.5" y2="170" stroke="#9a999c" stroke-width="1.2"/><line x1="708.0" y1="165" x2="708.0" y2="170" stroke="#9a999c" stroke-width="1.2"/><line x1="720.5" y1="162" x2="720.5" y2="170" stroke="#9a999c" stroke-width="1.2"/><line x1="733.0" y1="165" x2="733.0" y2="170" stroke="#9a999c" stroke-width="1.2"/><line x1="745.5" y1="162" x2="745.5" y2="170" stroke="#9a999c" stroke-width="1.2"/><line x1="758.0" y1="165" x2="758.0" y2="170" stroke="#9a999c" stroke-width="1.2"/><line x1="770.5" y1="162" x2="770.5" y2="170" stroke="#9a999c" stroke-width="1.2"/><line x1="783.0" y1="165" x2="783.0" y2="170" stroke="#9a999c" stroke-width="1.2"/><line x1="795.5" y1="152" x2="795.5" y2="170" stroke="#9a999c" stroke-width="1.2"/><line x1="808.0" y1="165" x2="808.0" y2="170" stroke="#9a999c" stroke-width="1.2"/><line x1="820.5" y1="162" x2="820.5" y2="170" stroke="#9a999c" stroke-width="1.2"/><line x1="833.0" y1="165" x2="833.0" y2="170" stroke="#9a999c" stroke-width="1.2"/><line x1="845.5" y1="162" x2="845.5" y2="170" stroke="#9a999c" stroke-width="1.2"/><line x1="858.0" y1="165" x2="858.0" y2="170" stroke="#9a999c" stroke-width="1.2"/><line x1="870.5" y1="162" x2="870.5" y2="170" stroke="#9a999c" stroke-width="1.2"/><line x1="883.0" y1="165" x2="883.0" y2="170" stroke="#9a999c" stroke-width="1.2"/><line x1="895.5" y1="162" x2="895.5" y2="170" stroke="#9a999c" stroke-width="1.2"/><line x1="908.0" y1="165" x2="908.0" y2="170" stroke="#9a999c" stroke-width="1.2"/><line x1="920.5" y1="152" x2="920.5" y2="170" stroke="#9a999c" stroke-width="1.2"/><line x1="933.0" y1="165" x2="933.0" y2="170" stroke="#9a999c" stroke-width="1.2"/><line x1="945.5" y1="162" x2="945.5" y2="170" stroke="#9a999c" stroke-width="1.2"/><line x1="958.0" y1="165" x2="958.0" y2="170" stroke="#9a999c" stroke-width="1.2"/><line x1="970.5" y1="162" x2="970.5" y2="170" stroke="#9a999c" stroke-width="1.2"/><line x1="983.0" y1="165" x2="983.0" y2="170" stroke="#9a999c" stroke-width="1.2"/><line x1="995.5" y1="162" x2="995.5" y2="170" stroke="#9a999c" stroke-width="1.2"/><line x1="1008.0" y1="165" x2="1008.0" y2="170" stroke="#9a999c" stroke-width="1.2"/><line x1="1020.5" y1="162" x2="1020.5" y2="170" stroke="#9a999c" stroke-width="1.2"/><line x1="1033.0" y1="165" x2="1033.0" y2="170" stroke="#9a999c" stroke-width="1.2"/><line x1="1045.5" y1="152" x2="1045.5" y2="170" stroke="#9a999c" stroke-width="1.2"/><line x1="1058.0" y1="165" x2="1058.0" y2="170" stroke="#9a999c" stroke-width="1.2"/><line x1="1070.5" y1="162" x2="1070.5" y2="170" stroke="#9a999c" stroke-width="1.2"/><line x1="1083.0" y1="165" x2="1083.0" y2="170" stroke="#9a999c" stroke-width="1.2"/><line x1="1095.5" y1="162" x2="1095.5" y2="170" stroke="#9a999c" stroke-width="1.2"/><line x1="1108.0" y1="165" x2="1108.0" y2="170" stroke="#9a999c" stroke-width="1.2"/><line x1="1120.5" y1="162" x2="1120.5" y2="170" stroke="#9a999c" stroke-width="1.2"/><line x1="1133.0" y1="165" x2="1133.0" y2="170" stroke="#9a999c" stroke-width="1.2"/><line x1="1145.5" y1="162" x2="1145.5" y2="170" stroke="#9a999c" stroke-width="1.2"/><line x1="1158.0" y1="165" x2="1158.0" y2="170" stroke="#9a999c" stroke-width="1.2"/><line x1="1170.5" y1="152" x2="1170.5" y2="170" stroke="#9a999c" stroke-width="1.2"/><line x1="1183.0" y1="165" x2="1183.0" y2="170" stroke="#9a999c" stroke-width="1.2"/><line x1="1195.5" y1="162" x2="1195.5" y2="170" stroke="#9a999c" stroke-width="1.2"/><line x1="1208.0" y1="165" x2="1208.0" y2="170" stroke="#9a999c" stroke-width="1.2"/><line x1="1220.5" y1="162" x2="1220.5" y2="170" stroke="#9a999c" stroke-width="1.2"/><line x1="1233.0" y1="165" x2="1233.0" y2="170" stroke="#9a999c" stroke-width="1.2"/><line x1="1245.5" y1="162" x2="1245.5" y2="170" stroke="#9a999c" stroke-width="1.2"/><line x1="1258.0" y1="165" x2="1258.0" y2="170" stroke="#9a999c" stroke-width="1.2"/><line x1="1270.5" y1="162" x2="1270.5" y2="170" stroke="#9a999c" stroke-width="1.2"/><line x1="1283.0" y1="165" x2="1283.0" y2="170" stroke="#9a999c" stroke-width="1.2"/><line x1="1295.5" y1="152" x2="1295.5" y2="170" stroke="#9a999c" stroke-width="1.2"/><line x1="1308.0" y1="165" x2="1308.0" y2="170" stroke="#9a999c" stroke-width="1.2"/><line x1="1320.5" y1="162" x2="1320.5" y2="170" stroke="#9a999c" stroke-width="1.2"/><line x1="1333.0" y1="165" x2="1333.0" y2="170" stroke="#9a999c" stroke-width="1.2"/><line x1="1345.5" y1="162" x2="1345.5" y2="170" stroke="#9a999c" stroke-width="1.2"/><line x1="1358.0" y1="165" x2="1358.0" y2="170" stroke="#9a999c" stroke-width="1.2"/><line x1="1370.5" y1="162" x2="1370.5" y2="170" stroke="#9a999c" stroke-width="1.2"/><line x1="1383.0" y1="165" x2="1383.0" y2="170" stroke="#9a999c" stroke-width="1.2"/><line x1="1395.5" y1="162" x2="1395.5" y2="170" stroke="#9a999c" stroke-width="1.2"/><line x1="1408.0" y1="165" x2="1408.0" y2="170" stroke="#9a999c" stroke-width="1.2"/><line x1="1420.5" y1="152" x2="1420.5" y2="170" stroke="#9a999c" stroke-width="1.2"/><line x1="1433.0" y1="165" x2="1433.0" y2="170" stroke="#9a999c" stroke-width="1.2"/><line x1="1445.5" y1="162" x2="1445.5" y2="170" stroke="#9a999c" stroke-width="1.2"/><line x1="1458.0" y1="165" x2="1458.0" y2="170" stroke="#9a999c" stroke-width="1.2"/><line x1="1470.5" y1="162" x2="1470.5" y2="170" stroke="#9a999c" stroke-width="1.2"/><line x1="1483.0" y1="165" x2="1483.0" y2="170" stroke="#9a999c" stroke-width="1.2"/><line x1="1495.5" y1="162" x2="1495.5" y2="170" stroke="#9a999c" stroke-width="1.2"/><line x1="1508.0" y1="165" x2="1508.0" y2="170" stroke="#9a999c" stroke-width="1.2"/><line x1="1520.5" y1="162" x2="1520.5" y2="170" stroke="#9a999c" stroke-width="1.2"/></svg><div class="t" style="left:52px;top:153px;font-size:13px;color:#a9a8ab;font-weight:normal;">750</div><div class="t" style="left:173px;top:153px;font-size:13px;color:#a9a8ab;font-weight:normal;">-500</div><div class="t" style="left:298px;top:153px;font-size:13px;color:#a9a8ab;font-weight:normal;">-250</div><div class="t" style="left:423px;top:153px;font-size:13px;color:#a9a8ab;font-weight:normal;">0</div><div class="t" style="left:548px;top:153px;font-size:13px;color:#a9a8ab;font-weight:normal;">250</div><div class="t" style="left:673px;top:153px;font-size:13px;color:#a9a8ab;font-weight:normal;">500</div><div class="t" style="left:798px;top:153px;font-size:13px;color:#a9a8ab;font-weight:normal;">750</div><div class="t" style="left:923px;top:153px;font-size:13px;color:#a9a8ab;font-weight:normal;">1000</div><div class="t" style="left:1048px;top:153px;font-size:13px;color:#a9a8ab;font-weight:normal;">1250</div><div class="t" style="left:1173px;top:153px;font-size:13px;color:#a9a8ab;font-weight:normal;">1500</div><div class="t" style="left:1298px;top:153px;font-size:13px;color:#a9a8ab;font-weight:normal;">1750</div><div class="t" style="left:1423px;top:153px;font-size:13px;color:#a9a8ab;font-weight:normal;">2k</div><svg style="left:36px;top:154px;" width="12" height="12" viewBox="0 0 12 12"><path d="M3 6 V4 a3 3 0 0 1 6 0 V6" fill="none" stroke="#222" stroke-width="1.5"/><rect x="1" y="6" width="10" height="6" fill="#e8b830" stroke="#222"/></svg><svg style="left:0px;top:0px;" width="52" height="1000" viewBox="0 0 52 1000"><line x1="46" y1="176.0" x2="51" y2="176.0" stroke="#9a999c" stroke-width="1.2"/><line x1="43" y1="188.5" x2="51" y2="188.5" stroke="#9a999c" stroke-width="1.2"/><line x1="46" y1="201.0" x2="51" y2="201.0" stroke="#9a999c" stroke-width="1.2"/><line x1="43" y1="213.5" x2="51" y2="213.5" stroke="#9a999c" stroke-width="1.2"/><line x1="46" y1="226.0" x2="51" y2="226.0" stroke="#9a999c" stroke-width="1.2"/><line x1="33" y1="238.5" x2="51" y2="238.5" stroke="#9a999c" stroke-width="1.2"/><line x1="46" y1="251.0" x2="51" y2="251.0" stroke="#9a999c" stroke-width="1.2"/><line x1="43" y1="263.5" x2="51" y2="263.5" stroke="#9a999c" stroke-width="1.2"/><line x1="46" y1="276.0" x2="51" y2="276.0" stroke="#9a999c" stroke-width="1.2"/><line x1="43" y1="288.5" x2="51" y2="288.5" stroke="#9a999c" stroke-width="1.2"/><line x1="46" y1="301.0" x2="51" y2="301.0" stroke="#9a999c" stroke-width="1.2"/><line x1="43" y1="313.5" x2="51" y2="313.5" stroke="#9a999c" stroke-width="1.2"/><line x1="46" y1="326.0" x2="51" y2="326.0" stroke="#9a999c" stroke-width="1.2"/><line x1="43" y1="338.5" x2="51" y2="338.5" stroke="#9a999c" stroke-width="1.2"/><line x1="46" y1="351.0" x2="51" y2="351.0" stroke="#9a999c" stroke-width="1.2"/><line x1="33" y1="363.5" x2="51" y2="363.5" stroke="#9a999c" stroke-width="1.2"/><line x1="46" y1="376.0" x2="51" y2="376.0" stroke="#9a999c" stroke-width="1.2"/><line x1="43" y1="388.5" x2="51" y2="388.5" stroke="#9a999c" stroke-width="1.2"/><line x1="46" y1="401.0" x2="51" y2="401.0" stroke="#9a999c" stroke-width="1.2"/><line x1="43" y1="413.5" x2="51" y2="413.5" stroke="#9a999c" stroke-width="1.2"/><line x1="46" y1="426.0" x2="51" y2="426.0" stroke="#9a999c" stroke-width="1.2"/><line x1="43" y1="438.5" x2="51" y2="438.5" stroke="#9a999c" stroke-width="1.2"/><line x1="46" y1="451.0" x2="51" y2="451.0" stroke="#9a999c" stroke-width="1.2"/><line x1="43" y1="463.5" x2="51" y2="463.5" stroke="#9a999c" stroke-width="1.2"/><line x1="46" y1="476.0" x2="51" y2="476.0" stroke="#9a999c" stroke-width="1.2"/><line x1="33" y1="488.5" x2="51" y2="488.5" stroke="#9a999c" stroke-width="1.2"/><line x1="46" y1="501.0" x2="51" y2="501.0" stroke="#9a999c" stroke-width="1.2"/><line x1="43" y1="513.5" x2="51" y2="513.5" stroke="#9a999c" stroke-width="1.2"/><line x1="46" y1="526.0" x2="51" y2="526.0" stroke="#9a999c" stroke-width="1.2"/><line x1="43" y1="538.5" x2="51" y2="538.5" stroke="#9a999c" stroke-width="1.2"/><line x1="46" y1="551.0" x2="51" y2="551.0" stroke="#9a999c" stroke-width="1.2"/><line x1="43" y1="563.5" x2="51" y2="563.5" stroke="#9a999c" stroke-width="1.2"/><line x1="46" y1="576.0" x2="51" y2="576.0" stroke="#9a999c" stroke-width="1.2"/><line x1="43" y1="588.5" x2="51" y2="588.5" stroke="#9a999c" stroke-width="1.2"/><line x1="46" y1="601.0" x2="51" y2="601.0" stroke="#9a999c" stroke-width="1.2"/><line x1="33" y1="613.5" x2="51" y2="613.5" stroke="#9a999c" stroke-width="1.2"/><line x1="46" y1="626.0" x2="51" y2="626.0" stroke="#9a999c" stroke-width="1.2"/><line x1="43" y1="638.5" x2="51" y2="638.5" stroke="#9a999c" stroke-width="1.2"/><line x1="46" y1="651.0" x2="51" y2="651.0" stroke="#9a999c" stroke-width="1.2"/><line x1="43" y1="663.5" x2="51" y2="663.5" stroke="#9a999c" stroke-width="1.2"/><line x1="46" y1="676.0" x2="51" y2="676.0" stroke="#9a999c" stroke-width="1.2"/><line x1="43" y1="688.5" x2="51" y2="688.5" stroke="#9a999c" stroke-width="1.2"/><line x1="46" y1="701.0" x2="51" y2="701.0" stroke="#9a999c" stroke-width="1.2"/><line x1="43" y1="713.5" x2="51" y2="713.5" stroke="#9a999c" stroke-width="1.2"/><line x1="46" y1="726.0" x2="51" y2="726.0" stroke="#9a999c" stroke-width="1.2"/><line x1="33" y1="738.5" x2="51" y2="738.5" stroke="#9a999c" stroke-width="1.2"/><line x1="46" y1="751.0" x2="51" y2="751.0" stroke="#9a999c" stroke-width="1.2"/><line x1="43" y1="763.5" x2="51" y2="763.5" stroke="#9a999c" stroke-width="1.2"/><line x1="46" y1="776.0" x2="51" y2="776.0" stroke="#9a999c" stroke-width="1.2"/><line x1="43" y1="788.5" x2="51" y2="788.5" stroke="#9a999c" stroke-width="1.2"/><line x1="46" y1="801.0" x2="51" y2="801.0" stroke="#9a999c" stroke-width="1.2"/><line x1="43" y1="813.5" x2="51" y2="813.5" stroke="#9a999c" stroke-width="1.2"/><line x1="46" y1="826.0" x2="51" y2="826.0" stroke="#9a999c" stroke-width="1.2"/><line x1="43" y1="838.5" x2="51" y2="838.5" stroke="#9a999c" stroke-width="1.2"/><line x1="46" y1="851.0" x2="51" y2="851.0" stroke="#9a999c" stroke-width="1.2"/><line x1="33" y1="863.5" x2="51" y2="863.5" stroke="#9a999c" stroke-width="1.2"/><line x1="46" y1="876.0" x2="51" y2="876.0" stroke="#9a999c" stroke-width="1.2"/><line x1="43" y1="888.5" x2="51" y2="888.5" stroke="#9a999c" stroke-width="1.2"/><line x1="46" y1="901.0" x2="51" y2="901.0" stroke="#9a999c" stroke-width="1.2"/><line x1="43" y1="913.5" x2="51" y2="913.5" stroke="#9a999c" stroke-width="1.2"/><line x1="46" y1="926.0" x2="51" y2="926.0" stroke="#9a999c" stroke-width="1.2"/><line x1="43" y1="938.5" x2="51" y2="938.5" stroke="#9a999c" stroke-width="1.2"/><line x1="46" y1="951.0" x2="51" y2="951.0" stroke="#9a999c" stroke-width="1.2"/><line x1="43" y1="963.5" x2="51" y2="963.5" stroke="#9a999c" stroke-width="1.2"/><line x1="46" y1="976.0" x2="51" y2="976.0" stroke="#9a999c" stroke-width="1.2"/><line x1="33" y1="988.5" x2="51" y2="988.5" stroke="#9a999c" stroke-width="1.2"/></svg><div class="t" style="left:35px;top:239.5px;font-size:13px;color:#a9a8ab;line-height:11px;width:10px;text-align:center">1<br>5<br>0<br>0</div><div class="t" style="left:35px;top:364.5px;font-size:13px;color:#a9a8ab;line-height:11px;width:10px;text-align:center">1<br>2<br>5<br>0</div><div class="t" style="left:35px;top:489.5px;font-size:13px;color:#a9a8ab;line-height:11px;width:10px;text-align:center">1<br>0<br>0<br>0</div><div class="t" style="left:35px;top:614.5px;font-size:13px;color:#a9a8ab;line-height:11px;width:10px;text-align:center">7<br>5<br>0</div><div class="t" style="left:35px;top:739.5px;font-size:13px;color:#a9a8ab;line-height:11px;width:10px;text-align:center">5<br>0<br>0</div><div class="t" style="left:35px;top:864.5px;font-size:13px;color:#a9a8ab;line-height:11px;width:10px;text-align:center">2<br>5<br>0</div><div class="t" style="left:35px;top:989.5px;font-size:13px;color:#a9a8ab;line-height:11px;width:10px;text-align:center">0</div><svg style="left:44px;top:624px;" width="8" height="12" viewBox="0 0 8 12"><path d="M1 1 L7 6 L1 11z" fill="#cfcfcf"/></svg><svg style="left:1009px;top:162px;" width="12" height="8" viewBox="0 0 12 8"><path d="M1 1 H11 L6 7z" fill="#cfcfcf"/></svg><div class="a" style="left:51px;top:170px;width:1478px;height:828px;background:#ffffff;"></div><div class="a" style="left:51px;top:170px;width:1478px;height:828px;overflow:hidden"><svg style="left:-51px;top:-170px" width="1920" height="1080" viewBox="0 0 1920 1080"><path d="M384.16 492.16 A301 301 0 0 1 878.01 812.87 L864.00 807.49 A286 286 0 0 0 394.77 502.77 Z" fill="none" stroke="#ff72a0" stroke-width="1.3"/><path d="M417.90 498.96 A273 273 0 0 1 869.83 695.47 L858.84 695.86 A262 262 0 0 0 425.11 507.27 Z" fill="none" stroke="#57bfe5" stroke-width="1.3"/><path d="M610.08 455.34 A250 250 0 0 1 815.65 826.20 L811.28 823.78 A245 245 0 0 0 609.82 460.34 Z" fill="#ff72a0"/><path d="M506.72 481.55 A241 241 0 0 1 828.66 638.57 L803.67 645.74 A215 215 0 0 0 516.46 505.66 Z" fill="none" stroke="#57bfe5" stroke-width="1.3"/><path d="M532.68 494.61 A220 220 0 0 1 764.29 847.88" fill="none" stroke="#57bfe5" stroke-width="1.8" opacity="0.75"/><path d="M809.84 917.84 A301 301 0 0 1 316.94 594.68 L331.83 600.55 A285 285 0 0 0 798.53 906.53 Z" fill="none" stroke="#ff72a0" stroke-width="1.3"/><path d="M581.74 954.53 A250 250 0 0 1 378.35 583.80 L382.72 586.22 A245 245 0 0 0 582.04 949.54 Z" fill="#ff72a0"/><path d="M771.84 913.36 A272 272 0 0 1 325.00 705.00 L337.00 705.00 A260 260 0 0 0 764.12 904.17 Z" fill="none" stroke="#57bfe5" stroke-width="1.3"/><path d="M661.83 913.14 A218 218 0 0 1 430.00 564.87" fill="none" stroke="#57bfe5" stroke-width="1.8" opacity="0.75"/><path d="M686.91 927.52 A240 240 0 0 1 367.49 775.17 L399.04 765.52 A207 207 0 0 0 674.54 896.93 Z" fill="none" stroke="#ff72a0" stroke-width="1.3"/><path d="M404.00 705.00 A193 193 0 0 1 773.31 626.50 L760.52 632.19 A179 179 0 0 0 418.00 705.00 Z" fill="#ff72a0"/><path d="M788.97 708.35 A192 192 0 0 1 420.26 780.02 L435.91 773.38 A175 175 0 0 0 771.97 708.05 Z" fill="#57bfe5"/><path d="M422.67 689.75 A175 175 0 0 1 718.57 579.12 L711.62 586.31 A165 165 0 0 0 432.63 690.62 Z" fill="#57bfe5"/><path d="M768.21 721.49 A172 172 0 0 1 479.70 830.79 L488.56 821.29 A159 159 0 0 0 755.27 720.24 Z" fill="#ff72a0"/><path d="M697.92 825.27 A157 157 0 0 1 445.64 746.69 L452.39 744.83 A150 150 0 0 0 693.42 819.91 Z" fill="#57bfe5"/><path d="M455.40 641.96 A155 155 0 0 1 669.77 568.14 L658.50 589.33 A131 131 0 0 0 477.33 651.72 Z" fill="#57bfe5"/><path d="M735.86 766.82 A152 152 0 0 1 525.64 839.21 L535.97 819.78 A130 130 0 0 0 715.76 757.88 Z" fill="#ff72a0"/><path d="M491.28 587.58 A158 158 0 0 1 748.88 661.45" fill="none" stroke="#ff72a0" stroke-width="3" opacity="0.75"/><path d="M474.55 637.13 A140 140 0 0 1 736.47 692.80" fill="none" stroke="#ff72a0" stroke-width="1.8" opacity="0.75"/><path d="M719.73 770.26 A139 139 0 0 1 458.43 715.91" fill="none" stroke="#57bfe5" stroke-width="1.8" opacity="0.75"/><circle cx="597.5" cy="704" r="72" fill="#57bfe5"/><rect x="383.5" y="403.5" width="516.0" height="411.0" fill="none" stroke="#000" stroke-width="1.4" stroke-dasharray="3 5" opacity="0.45"/><rect x="383.5" y="403.5" width="516.0" height="411.0" fill="none" stroke="#fff" stroke-width="1.4" stroke-dasharray="4 4" stroke-dashoffset="4" opacity="0.5"/><rect x="417.5" y="431.5" width="454.0" height="266.0" fill="none" stroke="#000" stroke-width="1.4" stroke-dasharray="3 5" opacity="0.45"/><rect x="417.5" y="431.5" width="454.0" height="266.0" fill="none" stroke="#fff" stroke-width="1.4" stroke-dasharray="4 4" stroke-dashoffset="4" opacity="0.5"/><rect x="610.5" y="455.5" width="237.0" height="371.0" fill="none" stroke="#000" stroke-width="1.4" stroke-dasharray="3 5" opacity="0.45"/><rect x="610.5" y="455.5" width="237.0" height="371.0" fill="none" stroke="#fff" stroke-width="1.4" stroke-dasharray="4 4" stroke-dashoffset="4" opacity="0.5"/><rect x="506.5" y="463.5" width="324.0" height="184.0" fill="none" stroke="#000" stroke-width="1.4" stroke-dasharray="3 5" opacity="0.45"/><rect x="506.5" y="463.5" width="324.0" height="184.0" fill="none" stroke="#fff" stroke-width="1.4" stroke-dasharray="4 4" stroke-dashoffset="4" opacity="0.5"/><rect x="532.5" y="484.5" width="286.0" height="365.0" fill="none" stroke="#000" stroke-width="1.4" stroke-dasharray="3 5" opacity="0.45"/><rect x="532.5" y="484.5" width="286.0" height="365.0" fill="none" stroke="#fff" stroke-width="1.4" stroke-dasharray="4 4" stroke-dashoffset="4" opacity="0.5"/><rect x="295.5" y="594.5" width="516.0" height="413.0" fill="none" stroke="#000" stroke-width="1.4" stroke-dasharray="3 5" opacity="0.45"/><rect x="295.5" y="594.5" width="516.0" height="413.0" fill="none" stroke="#fff" stroke-width="1.4" stroke-dasharray="4 4" stroke-dashoffset="4" opacity="0.5"/><rect x="347.5" y="584.5" width="235.0" height="371.0" fill="none" stroke="#000" stroke-width="1.4" stroke-dasharray="3 5" opacity="0.45"/><rect x="347.5" y="584.5" width="235.0" height="371.0" fill="none" stroke="#fff" stroke-width="1.4" stroke-dasharray="4 4" stroke-dashoffset="4" opacity="0.5"/><rect x="324.5" y="704.5" width="449.0" height="274.0" fill="none" stroke="#000" stroke-width="1.4" stroke-dasharray="3 5" opacity="0.45"/><rect x="324.5" y="704.5" width="449.0" height="274.0" fill="none" stroke="#fff" stroke-width="1.4" stroke-dasharray="4 4" stroke-dashoffset="4" opacity="0.5"/><rect x="378.5" y="564.5" width="285.0" height="360.0" fill="none" stroke="#000" stroke-width="1.4" stroke-dasharray="3 5" opacity="0.45"/><rect x="378.5" y="564.5" width="285.0" height="360.0" fill="none" stroke="#fff" stroke-width="1.4" stroke-dasharray="4 4" stroke-dashoffset="4" opacity="0.5"/><rect x="366.5" y="765.5" width="322.0" height="181.0" fill="none" stroke="#000" stroke-width="1.4" stroke-dasharray="3 5" opacity="0.45"/><rect x="366.5" y="765.5" width="322.0" height="181.0" fill="none" stroke="#fff" stroke-width="1.4" stroke-dasharray="4 4" stroke-dashoffset="4" opacity="0.5"/><rect x="404.5" y="512.5" width="369.0" height="193.0" fill="none" stroke="#000" stroke-width="1.4" stroke-dasharray="3 5" opacity="0.45"/><rect x="404.5" y="512.5" width="369.0" height="193.0" fill="none" stroke="#fff" stroke-width="1.4" stroke-dasharray="4 4" stroke-dashoffset="4" opacity="0.5"/><rect x="420.5" y="708.5" width="369.0" height="189.0" fill="none" stroke="#000" stroke-width="1.4" stroke-dasharray="3 5" opacity="0.45"/><rect x="420.5" y="708.5" width="369.0" height="189.0" fill="none" stroke="#fff" stroke-width="1.4" stroke-dasharray="4 4" stroke-dashoffset="4" opacity="0.5"/><rect x="423.5" y="530.5" width="296.0" height="161.0" fill="none" stroke="#000" stroke-width="1.4" stroke-dasharray="3 5" opacity="0.45"/><rect x="423.5" y="530.5" width="296.0" height="161.0" fill="none" stroke="#fff" stroke-width="1.4" stroke-dasharray="4 4" stroke-dashoffset="4" opacity="0.5"/><rect x="480.5" y="720.5" width="288.0" height="157.0" fill="none" stroke="#000" stroke-width="1.4" stroke-dasharray="3 5" opacity="0.45"/><rect x="480.5" y="720.5" width="288.0" height="157.0" fill="none" stroke="#fff" stroke-width="1.4" stroke-dasharray="4 4" stroke-dashoffset="4" opacity="0.5"/><rect x="446.5" y="745.5" width="252.0" height="117.0" fill="none" stroke="#000" stroke-width="1.4" stroke-dasharray="3 5" opacity="0.45"/><rect x="446.5" y="745.5" width="252.0" height="117.0" fill="none" stroke="#fff" stroke-width="1.4" stroke-dasharray="4 4" stroke-dashoffset="4" opacity="0.5"/><rect x="455.5" y="550.5" width="215.0" height="102.0" fill="none" stroke="#000" stroke-width="1.4" stroke-dasharray="3 5" opacity="0.45"/><rect x="455.5" y="550.5" width="215.0" height="102.0" fill="none" stroke="#fff" stroke-width="1.4" stroke-dasharray="4 4" stroke-dashoffset="4" opacity="0.5"/><rect x="526.5" y="758.5" width="210.0" height="99.0" fill="none" stroke="#000" stroke-width="1.4" stroke-dasharray="3 5" opacity="0.45"/><rect x="526.5" y="758.5" width="210.0" height="99.0" fill="none" stroke="#fff" stroke-width="1.4" stroke-dasharray="4 4" stroke-dashoffset="4" opacity="0.5"/><rect x="490.5" y="546.5" width="260.0" height="117.0" fill="none" stroke="#000" stroke-width="1.4" stroke-dasharray="3 5" opacity="0.45"/><rect x="490.5" y="546.5" width="260.0" height="117.0" fill="none" stroke="#fff" stroke-width="1.4" stroke-dasharray="4 4" stroke-dashoffset="4" opacity="0.5"/><rect x="474.5" y="564.5" width="263.0" height="130.0" fill="none" stroke="#000" stroke-width="1.4" stroke-dasharray="3 5" opacity="0.45"/><rect x="474.5" y="564.5" width="263.0" height="130.0" fill="none" stroke="#fff" stroke-width="1.4" stroke-dasharray="4 4" stroke-dashoffset="4" opacity="0.5"/><rect x="458.5" y="715.5" width="263.0" height="130.0" fill="none" stroke="#000" stroke-width="1.4" stroke-dasharray="3 5" opacity="0.45"/><rect x="458.5" y="715.5" width="263.0" height="130.0" fill="none" stroke="#fff" stroke-width="1.4" stroke-dasharray="4 4" stroke-dashoffset="4" opacity="0.5"/><rect x="526.5" y="632.5" width="144.0" height="144.0" fill="none" stroke="#000" stroke-width="1.4" stroke-dasharray="3 5" opacity="0.45"/><rect x="526.5" y="632.5" width="144.0" height="144.0" fill="none" stroke="#fff" stroke-width="1.4" stroke-dasharray="4 4" stroke-dashoffset="4" opacity="0.5"/><g transform="translate(289.5 396) rotate(45)"><path d="M-7.5 0 L-2.5 -5 V-2.3 H2.5 V-5 L7.5 0 L2.5 5 V2.3 H-2.5 V5z" fill="#000"/></g><g transform="translate(904.5 396) rotate(-45)"><path d="M-7.5 0 L-2.5 -5 V-2.3 H2.5 V-5 L7.5 0 L2.5 5 V2.3 H-2.5 V5z" fill="#000"/></g><g transform="translate(597 396.5) rotate(90)"><path d="M-7.5 0 L-2.5 -5 V-2.3 H2.5 V-5 L7.5 0 L2.5 5 V2.3 H-2.5 V5z" fill="#000"/></g><g transform="translate(289 705) rotate(0)"><path d="M-7.5 0 L-2.5 -5 V-2.3 H2.5 V-5 L7.5 0 L2.5 5 V2.3 H-2.5 V5z" fill="#000"/></g><g transform="translate(905 705) rotate(0)"><path d="M-7.5 0 L-2.5 -5 V-2.3 H2.5 V-5 L7.5 0 L2.5 5 V2.3 H-2.5 V5z" fill="#000"/></g></svg></div><div class="t" style="left:815px;top:961.5px;font-size:28.5px;color:#ababab;font-weight:bold;transform:scaleX(0.9522);transform-origin:0 0;">LOGOS</div><div class="t" style="left:920px;top:961.5px;font-size:28.5px;color:#bdbdbd;font-weight:normal;transform:scaleX(0.8153);transform-origin:0 0;-webkit-text-stroke:0;">BY</div><div class="t" style="left:956px;top:961.5px;font-size:28.5px;color:#ababab;font-weight:bold;transform:scaleX(1.0192);transform-origin:0 0;">NICK</div><div class="t" style="left:1030px;top:961.5px;font-size:28.5px;color:#bdbdbd;font-weight:normal;transform:scaleX(0.9945);transform-origin:0 0;-webkit-text-stroke:0;">.COM</div><svg style="left:0px;top:0px;pointer-events:none" width="1920" height="1080" viewBox="0 0 1920 1080"><path d="M1022 626.5 L1021.8 647.5 L1026.3 643.3 L1030.5 651.5 L1034 649.5 L1030.5 643.5 L1037.8 642.5 Z" fill="#fff" stroke="#7a7a7a" stroke-width="1.8" stroke-linejoin="round"/></svg><div class="a" style="left:1529px;top:151px;width:391px;height:849px;background:#3e3d40;"></div><div class="a" style="left:1529px;top:151px;width:5px;height:849px;background:#353437;"></div><div class="a" style="left:1534px;top:151px;width:386px;height:26px;background:#3a393c;"></div><div class="a" style="left:1534px;top:177px;width:386px;height:1px;background:#2f2e31;"></div><svg style="left:1536px;top:157px;" width="17" height="17" viewBox="0 0 17 17"><path d="M1 16 L4 6 L14 1 L13 9z" fill="#eee" stroke="#222"/><path d="M12 2 L16 4 L13 9z" fill="#e8b820"/></svg><div class="t" style="left:1553px;top:157px;font-size:19px;color:#dcdada;font-weight:normal;transform:scaleX(1.1298);transform-origin:0 0;">Fill and Stroke (Shift+Ctrl+F)</div><div class="a" style="left:1881px;top:158px;width:13px;height:13px;background:#3a393c;border:1px solid #5a595c;"></div><div class="a" style="left:1896px;top:155px;width:19px;height:20px;background:#4a494c;border:1px solid #222;"></div><svg style="left:1899px;top:159px;" width="12" height="12" viewBox="0 0 12 12"><rect x="1" y="1" width="10" height="10" fill="none" stroke="#777"/><path d="M3 3 L9 9 M9 3 L3 9" stroke="#777"/></svg><div class="a" style="left:1538px;top:182px;width:52px;height:29px;background:#323134;"></div><div class="a" style="left:1590px;top:182px;width:139px;height:29px;background:#2a292c;"></div><div class="a" style="left:1730px;top:182px;width:135px;height:29px;background:#2a292c;"></div><div class="a" style="left:1729px;top:182px;width:1px;height:29px;background:#252427;"></div><svg style="left:1543px;top:190px;" width="14" height="13" viewBox="0 0 14 13"><rect x="0.5" y="0.5" width="13" height="12" fill="#cfe0f4" stroke="#8aa"/></svg><div class="t" style="left:1562px;top:187px;font-size:19px;color:#e4e2e2;font-weight:normal;transform:scaleX(1.0300);transform-origin:0 0;">Fill</div><div class="a" style="left:1562px;top:204px;width:9px;height:2px;background:#d8d6d6;"></div><svg style="left:1593px;top:190px;" width="13" height="14" viewBox="0 0 13 14"><rect x="0.5" y="0.5" width="12" height="13" fill="none" stroke="#222"/></svg><div class="t" style="left:1611px;top:187px;font-size:19px;color:#eeeeee;font-weight:normal;transform:scaleX(1.1243);transform-origin:0 0;">Stroke paint</div><svg style="left:1732px;top:192px;" width="13" height="12" viewBox="0 0 13 12"><path d="M0 2 H13 M0 6 H13 M0 10 H13" stroke="#222" stroke-width="2"/></svg><div class="t" style="left:1749px;top:187px;font-size:19px;color:#eeeeee;font-weight:normal;transform:scaleX(1.1283);transform-origin:0 0;">Stroke style</div><div class="a" style="left:1539px;top:211px;width:373px;height:286px;background:#323134;border:1px solid #29282b;border-top:none;"></div><svg style="left:1553px;top:225px;" width="14" height="14" viewBox="0 0 14 14"><path d="M2 2 L12 12 M12 2 L2 12" stroke="#000" stroke-width="2.5"/></svg><div class="a" style="left:1577px;top:219px;width:27px;height:27px;background:#48474a;border-top:1px solid #222;border-left:1px solid #222;"></div><svg style="left:1580px;top:222px;" width="20" height="20" viewBox="0 0 20 20"><rect x="1" y="1" width="18" height="18" fill="#8ab0dc" stroke="#222"/></svg><svg style="left:1607px;top:222px;" width="20" height="20" viewBox="0 0 20 20"><defs><linearGradient id="lg1"><stop offset="0" stop-color="#8ab0dc"/><stop offset="1" stop-color="#f4f8fc"/></linearGradient></defs><rect x="1" y="1" width="18" height="18" fill="url(#lg1)" stroke="#222"/></svg><svg style="left:1635px;top:222px;" width="20" height="20" viewBox="0 0 20 20"><defs><radialGradient id="rg1"><stop offset="0" stop-color="#f4f8fc"/><stop offset="1" stop-color="#8ab0dc"/></radialGradient></defs><rect x="1" y="1" width="18" height="18" fill="url(#rg1)" stroke="#222"/></svg><svg style="left:1663px;top:222px;" width="20" height="20" viewBox="0 0 20 20"><rect x="1" y="1" width="18" height="18" fill="#fff" stroke="#222"/><rect x="10" y="1" width="9" height="9" fill="#8ab0dc"/><rect x="1" y="10" width="9" height="9" fill="#8ab0dc"/></svg><svg style="left:1691px;top:222px;" width="20" height="20" viewBox="0 0 20 20"><rect x="1" y="1" width="18" height="18" fill="#fff" stroke="#222"/><circle cx="6" cy="6" r="3" fill="#8ab0dc"/><circle cx="14" cy="6" r="3" fill="#8ab0dc"/><circle cx="6" cy="14" r="3" fill="#8ab0dc"/><circle cx="14" cy="14" r="3" fill="#8ab0dc"/></svg><svg style="left:1719px;top:222px;" width="20" height="20" viewBox="0 0 20 20"><rect x="1" y="1" width="18" height="18" fill="#f4f4f4" stroke="#222"/><rect x="3" y="3" width="14" height="14" fill="#fff" stroke="#bbb"/></svg><div class="t" style="left:1750px;top:220px;font-size:22px;font-weight:bold;color:#000">?</div><svg style="left:1868px;top:225px;" width="13" height="13" viewBox="0 0 13 13"><path d="M2 3 C0 10 4 12 6.5 12 C9 12 13 10 11 3" fill="none" stroke="#000" stroke-width="2.5"/></svg><div class="a" style="left:1885px;top:219px;width:21px;height:27px;background:#48474a;border-top:1px solid #222;border-left:1px solid #222;"></div><svg style="left:1887px;top:224px;" width="16" height="16" viewBox="0 0 16 16"><path d="M2 3 L5 5 L8 3 L11 5 L14 3 C15 10 12 14 8 14 C4 14 1 10 2 3z" fill="#000"/></svg><div class="t" style="left:1548px;top:256px;font-size:19px;color:#dedcdc;font-weight:bold;transform:scaleX(1.1694);transform-origin:0 0;">Flat color</div><div class="a" style="left:1547px;top:281px;width:68px;height:30px;background:#454447;border:1px solid #2a292c;border-bottom:none;box-shadow:inset 1px 1px 0 #555458;"></div><div class="t" style="left:1562px;top:286px;font-size:19px;color:#e6e4e4;font-weight:normal;transform:scaleX(0.9472);transform-origin:0 0;">RGB</div><div class="a" style="left:1621px;top:281px;width:67px;height:30px;background:#4c4b4e;border:1px solid #2a292c;border-bottom:none;box-shadow:inset 1px 1px 0 #555458;"></div><div class="t" style="left:1636px;top:286px;font-size:19px;color:#e6e4e4;font-weight:normal;transform:scaleX(0.9740);transform-origin:0 0;">HSL</div><div class="a" style="left:1690px;top:281px;width:69px;height:30px;background:#454447;border:1px solid #2a292c;border-bottom:none;box-shadow:inset 1px 1px 0 #555458;"></div><div class="t" style="left:1699px;top:286px;font-size:19px;color:#e6e4e4;font-weight:normal;transform:scaleX(0.9472);transform-origin:0 0;">CMYK</div><div class="a" style="left:1762px;top:281px;width:69px;height:30px;background:#454447;border:1px solid #2a292c;border-bottom:none;box-shadow:inset 1px 1px 0 #555458;"></div><div class="t" style="left:1769px;top:286px;font-size:19px;color:#e6e4e4;font-weight:normal;transform:scaleX(1.0584);transform-origin:0 0;">Wheel</div><div class="a" style="left:1835px;top:281px;width:68px;height:30px;background:#454447;border:1px solid #2a292c;border-bottom:none;box-shadow:inset 1px 1px 0 #555458;"></div><div class="t" style="left:1849px;top:286px;font-size:19px;color:#e6e4e4;font-weight:normal;transform:scaleX(0.9710);transform-origin:0 0;">CMS</div><div class="t" style="left:1555px;top:319px;font-size:19px;color:#d8d6d6;font-weight:normal;">H:</div><div class="a" style="left:1555px;top:337px;width:11px;height:2px;background:#d0cece;"></div><div class="a" style="left:1846px;top:315px;width:40px;height:27px;background:#5c5b5e;"></div><div class="a" style="left:1887px;top:315px;width:9px;height:27px;background:#2e2d30;border:1px solid #1c1b1e;"></div><div class="a" style="left:1890px;top:321px;width:3px;height:2px;background:#7a797c;"></div><div class="a" style="left:1890px;top:333px;width:3px;height:2px;background:#7a797c;"></div><div class="t" style="left:1849px;top:319.5px;font-size:19px;color:#f0f0f0;font-weight:normal;">190</div><div class="t" style="left:1555px;top:349px;font-size:19px;color:#d8d6d6;font-weight:normal;">S:</div><div class="a" style="left:1555px;top:367px;width:11px;height:2px;background:#d0cece;"></div><div class="a" style="left:1846px;top:345px;width:40px;height:27px;background:#5c5b5e;"></div><div class="a" style="left:1887px;top:345px;width:9px;height:27px;background:#2e2d30;border:1px solid #1c1b1e;"></div><div class="a" style="left:1890px;top:351px;width:3px;height:2px;background:#7a797c;"></div><div class="a" style="left:1890px;top:363px;width:3px;height:2px;background:#7a797c;"></div><div class="t" style="left:1849px;top:349.5px;font-size:19px;color:#f0f0f0;font-weight:normal;">72</div><div class="t" style="left:1555px;top:379px;font-size:19px;color:#d8d6d6;font-weight:normal;">L:</div><div class="a" style="left:1555px;top:397px;width:11px;height:2px;background:#d0cece;"></div><div class="a" style="left:1846px;top:375px;width:40px;height:27px;background:#5c5b5e;"></div><div class="a" style="left:1887px;top:375px;width:9px;height:27px;background:#2e2d30;border:1px solid #1c1b1e;"></div><div class="a" style="left:1890px;top:381px;width:3px;height:2px;background:#7a797c;"></div><div class="a" style="left:1890px;top:393px;width:3px;height:2px;background:#7a797c;"></div><div class="t" style="left:1849px;top:379.5px;font-size:19px;color:#f0f0f0;font-weight:normal;">124</div><div class="t" style="left:1555px;top:409px;font-size:19px;color:#d8d6d6;font-weight:normal;">A:</div><div class="a" style="left:1555px;top:427px;width:11px;height:2px;background:#d0cece;"></div><div class="a" style="left:1846px;top:405px;width:40px;height:27px;background:#5c5b5e;"></div><div class="a" style="left:1887px;top:405px;width:9px;height:27px;background:#2e2d30;border:1px solid #1c1b1e;"></div><div class="a" style="left:1890px;top:411px;width:3px;height:2px;background:#7a797c;"></div><div class="a" style="left:1890px;top:423px;width:3px;height:2px;background:#7a797c;"></div><div class="t" style="left:1849px;top:409.5px;font-size:19px;color:#f0f0f0;font-weight:normal;">255</div><div class="a" style="left:1584px;top:315px;width:253px;height:27px;background:linear-gradient(90deg,#ff0000 0%,#ffff00 16.7%,#00ff00 33.3%,#00ffff 50%,#0000ff 66.7%,#ff00ff 83.3%,#ff0000 100%);border:1px solid #222;"></div><div class="a" style="left:1584px;top:345px;width:253px;height:27px;background:linear-gradient(90deg,#7c7c7c,#7400f8);border:1px solid #222;"></div><div class="a" style="left:1584px;top:375px;width:253px;height:27px;background:linear-gradient(90deg,#000,#7d5ba3 50%,#fff);border:1px solid #222;"></div><div class="a" style="left:1584px;top:405px;width:253px;height:27px;border:1px solid #222;background-color:#999;background-image:linear-gradient(90deg,rgba(121,89,160,0),rgba(121,89,160,1)),linear-gradient(45deg,#666 25%,transparent 25%,transparent 75%,#666 75%),linear-gradient(45deg,#666 25%,transparent 25%,transparent 75%,#666 75%);background-size:100% 100%,16px 16px,16px 16px;background-position:0 0,0 0,8px 8px"></div><svg style="left:1766px;top:314px;" width="8" height="4" viewBox="0 0 8 4"><path d="M0 0 H8 L4 4z" fill="#222"/></svg><svg style="left:1766px;top:339px;" width="8" height="4" viewBox="0 0 8 4"><path d="M0 4 H8 L4 0z" fill="#222"/></svg><svg style="left:1651px;top:344px;" width="8" height="4" viewBox="0 0 8 4"><path d="M0 0 H8 L4 4z" fill="#222"/></svg><svg style="left:1651px;top:369px;" width="8" height="4" viewBox="0 0 8 4"><path d="M0 4 H8 L4 0z" fill="#222"/></svg><svg style="left:1702px;top:374px;" width="8" height="4" viewBox="0 0 8 4"><path d="M0 0 H8 L4 4z" fill="#222"/></svg><svg style="left:1702px;top:399px;" width="8" height="4" viewBox="0 0 8 4"><path d="M0 4 H8 L4 0z" fill="#222"/></svg><svg style="left:1548px;top:469px;" width="20" height="19" viewBox="0 0 20 19"><rect x="0.5" y="0.5" width="19" height="18" fill="#ddd" stroke="#888"/><path d="M3 3 L17 10 L3 17z" fill="#6a9"/><path d="M3 3 L10 6 L3 17z" fill="#c66"/></svg><svg style="left:1571px;top:469px;" width="19" height="19" viewBox="0 0 19 19"><circle cx="9.5" cy="9.5" r="7" fill="none" stroke="#d07070" stroke-width="4"/></svg><svg style="left:1598px;top:470px;" width="15" height="16" viewBox="0 0 15 16"><path d="M2 14 L9 7 M8 4 L12 8 L14 6 L10 2z" stroke="#ccc" stroke-width="1.6" fill="none"/></svg><div class="t" style="left:1742px;top:470px;font-size:19px;color:#d8d6d6;font-weight:normal;transform:scaleX(0.9640);transform-origin:0 0;">RGBA:</div><div class="a" style="left:1788px;top:488px;width:7px;height:2px;background:#d0cece;"></div><div class="a" style="left:1804px;top:466px;width:100px;height:27px;background:#5c5b5e;"></div><div class="t" style="left:1808px;top:470.5px;font-size:19px;color:#f0f0f0;font-weight:normal;transform:scaleX(1.0867);transform-origin:0 0;">7959a0ff</div><div class="a" style="left:1541px;top:502px;width:362px;height:27px;background:#666568;"></div><div class="a" style="left:1903px;top:502px;width:8px;height:27px;background:#2e2d30;border:1px solid #1c1b1e;"></div><div class="a" style="left:1906px;top:508px;width:3px;height:2px;background:#7a797c;"></div><div class="a" style="left:1906px;top:520px;width:3px;height:2px;background:#7a797c;"></div><div class="t" style="left:1546px;top:505px;font-size:19px;color:#f2f2f2;font-weight:normal;transform:scaleX(1.0493);transform-origin:0 0;">Blur (%)</div><div class="t" style="left:1866px;top:505px;font-size:19px;color:#f2f2f2;font-weight:normal;transform:scaleX(1.1358);transform-origin:0 0;">0.0</div><div class="a" style="left:1541px;top:535px;width:362px;height:27px;background:#666568;"></div><div class="a" style="left:1541px;top:535px;width:223px;height:27px;background:#3270d0;"></div><div class="a" style="left:1903px;top:535px;width:8px;height:27px;background:#2e2d30;border:1px solid #1c1b1e;"></div><div class="a" style="left:1906px;top:541px;width:3px;height:2px;background:#7a797c;"></div><div class="a" style="left:1906px;top:553px;width:3px;height:2px;background:#7a797c;"></div><div class="t" style="left:1546px;top:537px;font-size:19px;color:#ffffff;font-weight:normal;transform:scaleX(1.0480);transform-origin:0 0;">Opacity (%)</div><div class="t" style="left:1854px;top:538px;font-size:19px;color:#f2f2f2;font-weight:normal;transform:scaleX(1.1898);transform-origin:0 0;">61.9</div><svg style="left:1711px;top:571px;" width="36" height="3" viewBox="0 0 36 3"><rect x="0" y="0" width="2" height="2" fill="#222"/><rect x="5" y="0" width="2" height="2" fill="#222"/><rect x="10" y="0" width="2" height="2" fill="#222"/><rect x="15" y="0" width="2" height="2" fill="#222"/><rect x="20" y="0" width="2" height="2" fill="#222"/><rect x="25" y="0" width="2" height="2" fill="#222"/><rect x="30" y="0" width="2" height="2" fill="#222"/><rect x="35" y="0" width="2" height="2" fill="#222"/></svg><div class="a" style="left:1534px;top:576px;width:386px;height:26px;background:#3b3a3d;"></div><svg style="left:1537px;top:579px;" width="16" height="17" viewBox="0 0 16 17"><rect x="1" y="1" width="2" height="15" fill="#b03030"/><rect x="4" y="3" width="6" height="2" fill="#eee"/><rect x="4" y="8" width="10" height="2" fill="#eee"/><rect x="4" y="13" width="8" height="2" fill="#eee"/></svg><div class="t" style="left:1553px;top:577px;font-size:19px;color:#dcdada;font-weight:normal;transform:scaleX(1.1408);transform-origin:0 0;">Align and Distribute (Shift+Ctrl...</div><div class="a" style="left:1881px;top:579px;width:12px;height:12px;background:#3a393c;border:1px solid #6a696c;border-radius:2px"></div><svg style="left:1884px;top:582px;" width="6" height="6" viewBox="0 0 6 6"><path d="M5 0 L0 3 L5 6z" fill="#888"/></svg><div class="a" style="left:1901px;top:579px;width:12px;height:12px;background:#3a393c;border:1px solid #6a696c;border-radius:2px"></div><svg style="left:1903px;top:581px;" width="8" height="8" viewBox="0 0 8 8"><path d="M1 1 L7 7 M7 1 L1 7" stroke="#999" stroke-width="1.6"/></svg><div class="t" style="left:1545px;top:604px;font-size:18px;color:#dedcdc;font-weight:bold;transform:scaleX(1.2447);transform-origin:0 0;">Align</div><div class="t" style="left:1585px;top:634px;font-size:19px;color:#d8d6d6;font-weight:normal;transform:scaleX(1.0942);transform-origin:0 0;">Relative to:</div><div class="a" style="left:1696px;top:628px;width:214px;height:31px;background:#403f42;border:1px solid #2a292c;box-shadow:inset 1px 1px 0 #4e4d50;"></div><div class="a" style="left:1884px;top:630px;width:1px;height:27px;background:#333235;"></div><div class="t" style="left:1703px;top:634px;font-size:19px;color:#eeeeee;font-weight:normal;transform:scaleX(1.0629);transform-origin:0 0;">Last selected</div><svg style="left:1889px;top:638px;" width="16" height="11" viewBox="0 0 16 11"><path d="M1 1 H15 L8 9z" fill="#e8e8e8"/></svg><div class="t" style="left:1661px;top:662px;font-size:19px;color:#d8d6d6;font-weight:normal;transform:scaleX(1.0892);transform-origin:0 0;">Treat selection as group:</div><div class="a" style="left:1661px;top:679px;width:11px;height:2px;background:#d0cece;"></div><div class="a" style="left:1898px;top:665px;width:10px;height:10px;background:#3e3d40;border:1px solid #777;"></div><svg style="left:1723px;top:686px;" width="24" height="24" viewBox="0 0 24 24"><rect x="2" y="3" width="14" height="4" fill="#dde"/><rect x="5" y="10" width="12" height="4" fill="#dde"/><rect x="2" y="17" width="8" height="4" fill="#dde"/><rect x="13" y="1" width="2" height="22" fill="#a03030"/><rect x="14" y="0" width="4" height="4" fill="#f0c040"/></svg><svg style="left:1755px;top:686px;" width="24" height="24" viewBox="0 0 24 24"><rect x="2" y="3" width="14" height="4" fill="#dde"/><rect x="5" y="10" width="12" height="4" fill="#dde"/><rect x="2" y="17" width="8" height="4" fill="#dde"/><rect x="13" y="1" width="2" height="22" fill="#a03030"/><rect x="14" y="0" width="4" height="4" fill="#f0c040"/></svg><svg style="left:1787px;top:686px;" width="24" height="24" viewBox="0 0 24 24"><rect x="2" y="3" width="14" height="4" fill="#dde"/><rect x="5" y="10" width="12" height="4" fill="#dde"/><rect x="2" y="17" width="8" height="4" fill="#dde"/><rect x="13" y="1" width="2" height="22" fill="#a03030"/><rect x="14" y="0" width="4" height="4" fill="#f0c040"/></svg><svg style="left:1819px;top:686px;" width="24" height="24" viewBox="0 0 24 24"><rect x="2" y="3" width="14" height="4" fill="#dde"/><rect x="5" y="10" width="12" height="4" fill="#dde"/><rect x="2" y="17" width="8" height="4" fill="#dde"/><rect x="13" y="1" width="2" height="22" fill="#a03030"/><rect x="14" y="0" width="4" height="4" fill="#f0c040"/></svg><svg style="left:1851px;top:686px;" width="24" height="24" viewBox="0 0 24 24"><rect x="2" y="3" width="14" height="4" fill="#dde"/><rect x="5" y="10" width="12" height="4" fill="#dde"/><rect x="2" y="17" width="8" height="4" fill="#dde"/><rect x="13" y="1" width="2" height="22" fill="#a03030"/><rect x="14" y="0" width="4" height="4" fill="#f0c040"/></svg><svg style="left:1883px;top:686px;" width="24" height="24" viewBox="0 0 24 24"><text x="8" y="18" font-family="Liberation Serif" font-style="italic" font-size="20" fill="#111">y</text><circle cx="7" cy="12" r="4" fill="#457"/><path d="M2 2 V22" stroke="#a03030" stroke-width="1.5"/></svg><svg style="left:1723px;top:717px;" width="24" height="24" viewBox="0 0 24 24"><rect x="3" y="4" width="4" height="14" fill="#dde"/><rect x="10" y="8" width="4" height="12" fill="#dde"/><rect x="16" y="2" width="4" height="8" fill="#dde"/><rect x="1" y="19" width="22" height="2" fill="#a03030"/><rect x="18" y="18" width="4" height="4" fill="#f0c040"/></svg><svg style="left:1755px;top:717px;" width="24" height="24" viewBox="0 0 24 24"><rect x="3" y="4" width="4" height="14" fill="#dde"/><rect x="10" y="8" width="4" height="12" fill="#dde"/><rect x="16" y="2" width="4" height="8" fill="#dde"/><rect x="1" y="19" width="22" height="2" fill="#a03030"/><rect x="18" y="18" width="4" height="4" fill="#f0c040"/></svg><svg style="left:1787px;top:717px;" width="24" height="24" viewBox="0 0 24 24"><rect x="3" y="4" width="4" height="14" fill="#dde"/><rect x="10" y="8" width="4" height="12" fill="#dde"/><rect x="16" y="2" width="4" height="8" fill="#dde"/><rect x="1" y="19" width="22" height="2" fill="#a03030"/><rect x="18" y="18" width="4" height="4" fill="#f0c040"/></svg><svg style="left:1819px;top:717px;" width="24" height="24" viewBox="0 0 24 24"><rect x="3" y="4" width="4" height="14" fill="#dde"/><rect x="10" y="8" width="4" height="12" fill="#dde"/><rect x="16" y="2" width="4" height="8" fill="#dde"/><rect x="1" y="19" width="22" height="2" fill="#a03030"/><rect x="18" y="18" width="4" height="4" fill="#f0c040"/></svg><svg style="left:1851px;top:717px;" width="24" height="24" viewBox="0 0 24 24"><rect x="3" y="4" width="4" height="14" fill="#dde"/><rect x="10" y="8" width="4" height="12" fill="#dde"/><rect x="16" y="2" width="4" height="8" fill="#dde"/><rect x="1" y="19" width="22" height="2" fill="#a03030"/><rect x="18" y="18" width="4" height="4" fill="#f0c040"/></svg><svg style="left:1883px;top:717px;" width="24" height="24" viewBox="0 0 24 24"><text x="8" y="18" font-family="Liberation Serif" font-style="italic" font-size="20" fill="#111">y</text><circle cx="7" cy="12" r="4" fill="#457"/><path d="M2 2 V22" stroke="#a03030" stroke-width="1.5"/></svg><div class="t" style="left:1544px;top:752px;font-size:18px;color:#dedcdc;font-weight:bold;transform:scaleX(1.2856);transform-origin:0 0;">Distribute</div><svg style="left:1753px;top:780px;" width="24" height="24" viewBox="0 0 24 24"><rect x="2" y="6" width="3" height="16" fill="#dde"/><rect x="8" y="8" width="4" height="8" fill="#dde"/><rect x="15" y="6" width="4" height="12" fill="#dde"/><path d="M1 2 H22" stroke="#a03030" stroke-width="2" stroke-dasharray="2 2"/></svg><svg style="left:1785px;top:780px;" width="24" height="24" viewBox="0 0 24 24"><rect x="2" y="6" width="3" height="16" fill="#dde"/><rect x="8" y="8" width="4" height="8" fill="#dde"/><rect x="15" y="6" width="4" height="12" fill="#dde"/><path d="M1 2 H22" stroke="#a03030" stroke-width="2" stroke-dasharray="2 2"/></svg><svg style="left:1817px;top:780px;" width="24" height="24" viewBox="0 0 24 24"><rect x="2" y="6" width="3" height="16" fill="#dde"/><rect x="8" y="8" width="4" height="8" fill="#dde"/><rect x="15" y="6" width="4" height="12" fill="#dde"/><path d="M1 2 H22" stroke="#a03030" stroke-width="2" stroke-dasharray="2 2"/></svg><svg style="left:1849px;top:780px;" width="24" height="24" viewBox="0 0 24 24"><rect x="2" y="6" width="3" height="16" fill="#dde"/><rect x="8" y="8" width="4" height="8" fill="#dde"/><rect x="15" y="6" width="4" height="12" fill="#dde"/><path d="M1 2 H22" stroke="#a03030" stroke-width="2" stroke-dasharray="2 2"/></svg><svg style="left:1883px;top:780px;" width="24" height="24" viewBox="0 0 24 24"><text x="8" y="18" font-family="Liberation Serif" font-style="italic" font-size="20" fill="#111">y</text><circle cx="7" cy="12" r="4" fill="#457"/><path d="M2 2 V22" stroke="#a03030" stroke-width="1.5"/></svg><svg style="left:1753px;top:812px;" width="24" height="24" viewBox="0 0 24 24"><rect x="5" y="2" width="8" height="4" fill="#dde"/><rect x="5" y="10" width="14" height="3" fill="#dde"/><rect x="5" y="17" width="16" height="4" fill="#dde"/><path d="M2 1 V22" stroke="#a03030" stroke-width="2" stroke-dasharray="2 2"/></svg><svg style="left:1785px;top:812px;" width="24" height="24" viewBox="0 0 24 24"><rect x="5" y="2" width="8" height="4" fill="#dde"/><rect x="5" y="10" width="14" height="3" fill="#dde"/><rect x="5" y="17" width="16" height="4" fill="#dde"/><path d="M2 1 V22" stroke="#a03030" stroke-width="2" stroke-dasharray="2 2"/></svg><svg style="left:1817px;top:812px;" width="24" height="24" viewBox="0 0 24 24"><rect x="5" y="2" width="8" height="4" fill="#dde"/><rect x="5" y="10" width="14" height="3" fill="#dde"/><rect x="5" y="17" width="16" height="4" fill="#dde"/><path d="M2 1 V22" stroke="#a03030" stroke-width="2" stroke-dasharray="2 2"/></svg><svg style="left:1849px;top:812px;" width="24" height="24" viewBox="0 0 24 24"><rect x="5" y="2" width="8" height="4" fill="#dde"/><rect x="5" y="10" width="14" height="3" fill="#dde"/><rect x="5" y="17" width="16" height="4" fill="#dde"/><path d="M2 1 V22" stroke="#a03030" stroke-width="2" stroke-dasharray="2 2"/></svg><svg style="left:1883px;top:812px;" width="24" height="24" viewBox="0 0 24 24"><text x="8" y="18" font-family="Liberation Serif" font-style="italic" font-size="20" fill="#111">y</text><circle cx="7" cy="12" r="4" fill="#457"/><path d="M2 2 V22" stroke="#a03030" stroke-width="1.5"/></svg><div class="t" style="left:1544px;top:847px;font-size:18px;color:#dedcdc;font-weight:bold;transform:scaleX(1.2690);transform-origin:0 0;">Rearrange</div><svg style="left:1722px;top:875px;" width="24" height="22" viewBox="0 0 24 22"><g fill="#5a5ab0"><circle cx="3" cy="6" r="1.6"/><circle cx="8" cy="2" r="1.6"/><circle cx="13" cy="8" r="1.6"/><circle cx="18" cy="3" r="1.6"/><circle cx="21" cy="12" r="1.6"/><circle cx="6" cy="16" r="1.6"/><circle cx="12" cy="19" r="1.6"/><circle cx="18" cy="18" r="1.6"/></g></svg><svg style="left:1755px;top:875px;" width="24" height="24" viewBox="0 0 24 24"><rect x="1" y="1" width="8" height="8" fill="#b0c8e8" stroke="#222"/><rect x="13" y="13" width="9" height="9" fill="#b0c8e8" stroke="#222"/><path d="M9 5 C16 5 17 8 17 13" stroke="#111" stroke-width="2" fill="none"/></svg><svg style="left:1787px;top:875px;" width="24" height="24" viewBox="0 0 24 24"><rect x="1" y="1" width="8" height="8" fill="#b0c8e8" stroke="#222"/><rect x="13" y="13" width="9" height="9" fill="#b0c8e8" stroke="#222"/><path d="M9 5 C16 5 17 8 17 13" stroke="#111" stroke-width="2" fill="none"/><path d="M6 14 L10 20" stroke="#b03030" stroke-width="2"/></svg><svg style="left:1819px;top:875px;" width="24" height="24" viewBox="0 0 24 24"><rect x="1" y="1" width="8" height="8" fill="#b0c8e8" stroke="#222"/><rect x="13" y="13" width="9" height="9" fill="#b0c8e8" stroke="#222"/><path d="M9 5 C16 5 17 8 17 13" stroke="#111" stroke-width="2" fill="none"/><path d="M6 14 L10 20" stroke="#b03030" stroke-width="2"/></svg><svg style="left:1850px;top:875px;" width="26" height="24" viewBox="0 0 26 24"><g fill="#f0c030"><rect x="2" y="6" width="5" height="4"/><rect x="9" y="1" width="5" height="4"/><rect x="16" y="8" width="5" height="4"/><rect x="9" y="13" width="5" height="4"/><rect x="2" y="19" width="5" height="4"/><rect x="13" y="19" width="5" height="4"/></g></svg><svg style="left:1880px;top:874px;" width="28" height="24" viewBox="0 0 28 24"><rect x="2" y="9" width="9" height="6" fill="#f0c030"/><rect x="19" y="2" width="7" height="6" fill="#f0c030"/><rect x="19" y="17" width="7" height="6" fill="#f0c030"/><path d="M11 12 L19 5 M11 12 L19 20" stroke="#a03030"/></svg><div class="t" style="left:1544px;top:911px;font-size:18px;color:#dedcdc;font-weight:bold;transform:scaleX(1.1203);transform-origin:0 0;">Remove overlaps</div><div class="t" style="left:1708px;top:941px;font-size:19px;color:#d8d6d6;font-weight:normal;">H:</div><div class="a" style="left:1708px;top:958px;width:12px;height:2px;background:#d0cece;"></div><div class="a" style="left:1732px;top:937px;width:48px;height:26px;background:#5c5b5e;"></div><div class="a" style="left:1780px;top:937px;width:9px;height:26px;background:#2e2d30;border:1px solid #1c1b1e;"></div><div class="a" style="left:1783px;top:943px;width:3px;height:2px;background:#7a797c;"></div><div class="a" style="left:1783px;top:954px;width:3px;height:2px;background:#7a797c;"></div><div class="t" style="left:1735px;top:941px;font-size:19px;color:#f0f0f0;font-weight:normal;">0.0</div><div class="t" style="left:1793px;top:941px;font-size:19px;color:#d8d6d6;font-weight:normal;">V:</div><div class="a" style="left:1793px;top:958px;width:11px;height:2px;background:#d0cece;"></div><div class="a" style="left:1817px;top:937px;width:48px;height:26px;background:#5c5b5e;"></div><div class="a" style="left:1865px;top:937px;width:9px;height:26px;background:#2e2d30;border:1px solid #1c1b1e;"></div><div class="a" style="left:1868px;top:943px;width:3px;height:2px;background:#7a797c;"></div><div class="a" style="left:1868px;top:954px;width:3px;height:2px;background:#7a797c;"></div><div class="t" style="left:1820px;top:941px;font-size:19px;color:#f0f0f0;font-weight:normal;">0.0</div><svg style="left:1882px;top:937px;" width="26" height="26" viewBox="0 0 26 26"><rect x="1" y="9" width="5" height="15" fill="#dde" stroke="#222"/><rect x="1" y="2" width="5" height="5" fill="#dde" stroke="#222"/><rect x="9" y="2" width="5" height="22" fill="#dde" stroke="#222"/><rect x="17" y="2" width="5" height="22" fill="#dde" stroke="#222"/></svg><div class="a" style="left:1536px;top:969px;width:376px;height:1px;background:#333235;"></div><svg style="left:1711px;top:974px;" width="36" height="3" viewBox="0 0 36 3"><rect x="0" y="0" width="2" height="2" fill="#222"/><rect x="5" y="0" width="2" height="2" fill="#222"/><rect x="10" y="0" width="2" height="2" fill="#222"/><rect x="15" y="0" width="2" height="2" fill="#222"/><rect x="20" y="0" width="2" height="2" fill="#222"/><rect x="25" y="0" width="2" height="2" fill="#222"/><rect x="30" y="0" width="2" height="2" fill="#222"/><rect x="35" y="0" width="2" height="2" fill="#222"/></svg><div class="a" style="left:0px;top:998px;width:1920px;height:37px;background:#3e3d40;"></div><svg style="left:0px;top:1000px;" width="1920" height="16" viewBox="0 0 1920 16"><rect x="2.75" y="0" width="16.2" height="16" fill="#4a58d8"/><rect x="18.75" y="0" width="16.2" height="16" fill="#8890e8"/><rect x="34.75" y="0" width="16.2" height="16" fill="#b4bcf4"/><rect x="50.75" y="0" width="16.2" height="16" fill="#dcdcfa"/><rect x="66.75" y="0" width="16.2" height="16" fill="#1c1d28"/><rect x="82.75" y="0" width="16.2" height="16" fill="#3a3b4c"/><rect x="98.75" y="0" width="16.2" height="16" fill="#585a72"/><rect x="114.75" y="0" width="16.2" height="16" fill="#767898"/><rect x="130.75" y="0" width="16.2" height="16" fill="#9a9cb8"/><rect x="146.75" y="0" width="16.2" height="16" fill="#c4c4d4"/><rect x="162.75" y="0" width="16.2" height="16" fill="#e6e6ee"/><rect x="178.75" y="0" width="16.2" height="16" fill="#0e0830"/><rect x="194.75" y="0" width="16.2" height="16" fill="#1e0c5c"/><rect x="210.75" y="0" width="16.2" height="16" fill="#2e0e8c"/><rect x="226.75" y="0" width="16.2" height="16" fill="#3e10b8"/><rect x="242.75" y="0" width="16.2" height="16" fill="#5010dc"/><rect x="258.75" y="0" width="16.2" height="16" fill="#6018f4"/><rect x="274.75" y="0" width="16.2" height="16" fill="#7c3cf8"/><rect x="290.75" y="0" width="16.2" height="16" fill="#9a68f8"/><rect x="306.75" y="0" width="16.2" height="16" fill="#b494f8"/><rect x="322.75" y="0" width="16.2" height="16" fill="#ccb8fa"/><rect x="338.75" y="0" width="16.2" height="16" fill="#e6dcfc"/><rect x="354.75" y="0" width="16.2" height="16" fill="#1c1434"/><rect x="370.75" y="0" width="16.2" height="16" fill="#30205a"/><rect x="386.75" y="0" width="16.2" height="16" fill="#443084"/><rect x="402.75" y="0" width="16.2" height="16" fill="#5a3eaa"/><rect x="418.75" y="0" width="16.2" height="16" fill="#6c4ccc"/><rect x="434.75" y="0" width="16.2" height="16" fill="#9474e0"/><rect x="450.75" y="0" width="16.2" height="16" fill="#a890e8"/><rect x="466.75" y="0" width="16.2" height="16" fill="#c8b8f0"/><rect x="482.75" y="0" width="16.2" height="16" fill="#e4dcf8"/><rect x="498.75" y="0" width="16.2" height="16" fill="#1c1a24"/><rect x="514.75" y="0" width="16.2" height="16" fill="#3a3444"/><rect x="530.75" y="0" width="16.2" height="16" fill="#5a5068"/><rect x="546.75" y="0" width="16.2" height="16" fill="#7a6e90"/><rect x="562.75" y="0" width="16.2" height="16" fill="#a098b4"/><rect x="578.75" y="0" width="16.2" height="16" fill="#c4bccc"/><rect x="594.75" y="0" width="16.2" height="16" fill="#e4e0e8"/><rect x="610.75" y="0" width="16.2" height="16" fill="#200830"/><rect x="626.75" y="0" width="16.2" height="16" fill="#3c0c58"/><rect x="642.75" y="0" width="16.2" height="16" fill="#5a1080"/><rect x="658.75" y="0" width="16.2" height="16" fill="#7814a8"/><rect x="674.75" y="0" width="16.2" height="16" fill="#9818cc"/><rect x="690.75" y="0" width="16.2" height="16" fill="#b820e8"/><rect x="706.75" y="0" width="16.2" height="16" fill="#cc30f8"/><rect x="722.75" y="0" width="16.2" height="16" fill="#dc60f8"/><rect x="738.75" y="0" width="16.2" height="16" fill="#e488f8"/><rect x="754.75" y="0" width="16.2" height="16" fill="#ecb0fa"/><rect x="770.75" y="0" width="16.2" height="16" fill="#f4d4fc"/><rect x="786.75" y="0" width="16.2" height="16" fill="#1c1024"/><rect x="802.75" y="0" width="16.2" height="16" fill="#381c4c"/><rect x="818.75" y="0" width="16.2" height="16" fill="#582a74"/><rect x="834.75" y="0" width="16.2" height="16" fill="#783898"/><rect x="850.75" y="0" width="16.2" height="16" fill="#9848bc"/><rect x="866.75" y="0" width="16.2" height="16" fill="#b070d0"/><rect x="882.75" y="0" width="16.2" height="16" fill="#c898dc"/><rect x="898.75" y="0" width="16.2" height="16" fill="#dcbce8"/><rect x="914.75" y="0" width="16.2" height="16" fill="#eee0f4"/><rect x="930.75" y="0" width="16.2" height="16" fill="#201c28"/><rect x="946.75" y="0" width="16.2" height="16" fill="#3c3040"/><rect x="962.75" y="0" width="16.2" height="16" fill="#5e4c64"/><rect x="978.75" y="0" width="16.2" height="16" fill="#846c8c"/><rect x="994.75" y="0" width="16.2" height="16" fill="#a890b0"/><rect x="1010.75" y="0" width="16.2" height="16" fill="#c8bccc"/><rect x="1026.75" y="0" width="16.2" height="16" fill="#e8e4ec"/><rect x="1042.75" y="0" width="16.2" height="16" fill="#280818"/><rect x="1058.75" y="0" width="16.2" height="16" fill="#500c40"/><rect x="1074.75" y="0" width="16.2" height="16" fill="#801470"/><rect x="1090.75" y="0" width="16.2" height="16" fill="#a81890"/><rect x="1106.75" y="0" width="16.2" height="16" fill="#d020b0"/><rect x="1122.75" y="0" width="16.2" height="16" fill="#f020d0"/><rect x="1138.75" y="0" width="16.2" height="16" fill="#ff48d8"/><rect x="1154.75" y="0" width="16.2" height="16" fill="#ff70e0"/><rect x="1170.75" y="0" width="16.2" height="16" fill="#ff98e8"/><rect x="1186.75" y="0" width="16.2" height="16" fill="#ffbcf0"/><rect x="1202.75" y="0" width="16.2" height="16" fill="#ffdcf8"/><rect x="1218.75" y="0" width="16.2" height="16" fill="#200c18"/><rect x="1234.75" y="0" width="16.2" height="16" fill="#4a1a40"/><rect x="1250.75" y="0" width="16.2" height="16" fill="#742868"/><rect x="1266.75" y="0" width="16.2" height="16" fill="#9c3890"/><rect x="1282.75" y="0" width="16.2" height="16" fill="#c44cb0"/><rect x="1298.75" y="0" width="16.2" height="16" fill="#d478c4"/><rect x="1314.75" y="0" width="16.2" height="16" fill="#e0a0d4"/><rect x="1330.75" y="0" width="16.2" height="16" fill="#ecc4e4"/><rect x="1346.75" y="0" width="16.2" height="16" fill="#f4e0f0"/><rect x="1362.75" y="0" width="16.2" height="16" fill="#201c20"/><rect x="1378.75" y="0" width="16.2" height="16" fill="#40303c"/><rect x="1394.75" y="0" width="16.2" height="16" fill="#6a5468"/><rect x="1410.75" y="0" width="16.2" height="16" fill="#94788c"/><rect x="1426.75" y="0" width="16.2" height="16" fill="#b8a0b4"/><rect x="1442.75" y="0" width="16.2" height="16" fill="#d4c4d0"/><rect x="1458.75" y="0" width="16.2" height="16" fill="#ece4ec"/><rect x="1474.75" y="0" width="16.2" height="16" fill="#300818"/><rect x="1490.75" y="0" width="16.2" height="16" fill="#600c24"/><rect x="1506.75" y="0" width="16.2" height="16" fill="#901434"/><rect x="1522.75" y="0" width="16.2" height="16" fill="#c01844"/><rect x="1538.75" y="0" width="16.2" height="16" fill="#e81c54"/><rect x="1554.75" y="0" width="16.2" height="16" fill="#ff2060"/><rect x="1570.75" y="0" width="16.2" height="16" fill="#ff4c80"/><rect x="1586.75" y="0" width="16.2" height="16" fill="#ff74a0"/><rect x="1602.75" y="0" width="16.2" height="16" fill="#ff9cb8"/><rect x="1618.75" y="0" width="16.2" height="16" fill="#ffbcd0"/><rect x="1634.75" y="0" width="16.2" height="16" fill="#ffdce8"/><rect x="1650.75" y="0" width="16.2" height="16" fill="#2c1018"/><rect x="1666.75" y="0" width="16.2" height="16" fill="#5a1c30"/><rect x="1682.75" y="0" width="16.2" height="16" fill="#882c48"/><rect x="1698.75" y="0" width="16.2" height="16" fill="#b03c60"/><rect x="1714.75" y="0" width="16.2" height="16" fill="#d85078"/><rect x="1730.75" y="0" width="16.2" height="16" fill="#e07890"/><rect x="1746.75" y="0" width="16.2" height="16" fill="#e8a0b0"/><rect x="1762.75" y="0" width="16.2" height="16" fill="#f0c4cc"/><rect x="1778.75" y="0" width="16.2" height="16" fill="#f8e0e4"/><rect x="1794.75" y="0" width="16.2" height="16" fill="#201818"/><rect x="1810.75" y="0" width="16.2" height="16" fill="#483438"/><rect x="1826.75" y="0" width="16.2" height="16" fill="#6c5458"/><rect x="1842.75" y="0" width="16.2" height="16" fill="#94787c"/><rect x="1858.75" y="0" width="16.2" height="16" fill="#b4a0a4"/><rect x="1874.75" y="0" width="16.2" height="16" fill="#d0c4c8"/><rect x="1890.75" y="0" width="16.2" height="16" fill="#e8e4e8"/></svg><svg style="left:1908px;top:999px;" width="10" height="14" viewBox="0 0 10 14"><path d="M8 3 L3 7 L8 11z" fill="#ddd"/></svg><div class="a" style="left:0px;top:1018px;width:1920px;height:17px;background:#3e3d40;"></div><div class="a" style="left:0px;top:1021px;width:1863px;height:13px;background:#48474a;"></div><div class="a" style="left:12px;top:1021px;width:1366px;height:13px;background:#555457;border-top:1px solid #5e5d60;"></div><svg style="left:3px;top:1023px;" width="8" height="9" viewBox="0 0 8 9"><path d="M6 1 L2 4.5 L6 8z" fill="#cfcfcf"/></svg><div class="a" style="left:1897px;top:1020px;width:14px;height:15px;background:#353437;"></div><svg style="left:1900px;top:1023px;" width="8" height="8" viewBox="0 0 8 8"><path d="M7 1 L1 7" stroke="#ccc" stroke-width="1.5"/></svg><div class="a" style="left:0px;top:1035px;width:1920px;height:45px;background:#3e3d40;"></div><div class="t" style="left:3px;top:1038px;font-size:19px;color:#d8d6d6;font-weight:normal;transform:scaleX(1.0491);transform-origin:0 0;">Fill:</div><div class="t" style="left:66px;top:1038px;font-size:19px;color:#dedede;font-weight:bold;">a</div><div class="a" style="left:78px;top:1036px;width:95px;height:22px;background:#7d60a8;"></div><div class="t" style="left:3px;top:1060px;font-size:19px;color:#d8d6d6;font-weight:normal;transform:scaleX(1.1726);transform-origin:0 0;">Strok</div><div class="t" style="left:52px;top:1060px;font-size:19px;color:#d8d6d6;font-weight:normal;">e</div><div class="t" style="left:60px;top:1060px;font-size:19px;color:#d8d6d6;font-weight:bold;">m</div><div class="t" style="left:80px;top:1060px;font-size:19px;color:#d8d6d6;font-style:italic;transform:scaleX(1.05);transform-origin:0 0">/one</div><div class="t" style="left:131px;top:1060px;font-size:19px;color:#d8d6d6;font-weight:normal;transform:scaleX(1.1087);transform-origin:0 0;">3.43</div><div class="t" style="left:171px;top:1048px;font-size:19px;color:#d8d6d6;font-weight:normal;transform:scaleX(0.7977);transform-origin:0 0;">O:</div><div class="a" style="left:188px;top:1045px;width:10px;height:26px;background:#5c5b5e;"></div><div class="a" style="left:198px;top:1045px;width:9px;height:26px;background:#2e2d30;border:1px solid #1c1b1e;"></div><svg style="left:217px;top:1052px;" width="12" height="12" viewBox="0 0 12 12"><rect x="1" y="5" width="9" height="6" fill="#e8d070" stroke="#333"/><path d="M2.5 5 V3 a3 3 0 0 1 6 0" fill="none" stroke="#ccc"/></svg><div class="a" style="left:232px;top:1036px;width:113px;height:44px;background:#403f42;border:1px solid #2a292c;box-shadow:inset 1px 1px 0 #4e4d50;"></div><div class="a" style="left:320px;top:1038px;width:1px;height:42px;background:#333235;"></div><div class="t" style="left:238px;top:1048px;font-size:19px;color:#eeeeee;font-weight:normal;transform:scaleX(1.0567);transform-origin:0 0;">•Layer 1</div><svg style="left:323px;top:1050px;" width="16" height="11" viewBox="0 0 16 11"><path d="M1 1 H15 L8 9z" fill="#e8e8e8"/></svg><div class="t" style="left:348px;top:1048px;font-size:19px;color:#d8d6d6;transform:scaleX(1.1112);transform-origin:0 0"><b>21</b> objects selected of types <b>Path</b>, <b>Circle</b> in layer <b>Layer 1</b>. Click selection to toggle scale/rotation handles.</div><div class="t" style="left:1730px;top:1039px;font-size:18px;color:#dcdcdc;font-family:'Liberation Mono',monospace;letter-spacing:0.2px">X:1192.00</div><div class="t" style="left:1730px;top:1061px;font-size:18px;color:#dcdcdc;font-family:'Liberation Mono',monospace;letter-spacing:0.2px">Y: 716.00</div><div class="a" style="left:1727px;top:1038px;width:1px;height:42px;background:#333235;"></div><div class="t" style="left:1843px;top:1050px;font-size:19px;color:#d8d6d6;font-weight:normal;">Z:</div><div class="a" style="left:1864px;top:1046px;width:46px;height:25px;background:#5c5b5e;"></div><div class="a" style="left:1910px;top:1046px;width:9px;height:25px;background:#2a292c;"></div><div class="a" style="left:1864px;top:1046px;width:46px;height:25px;overflow:hidden"><div class="t" style="left:14px;top:4px;font-size:19px;color:#f0f0f0">50%</div></div><svg style="left:1856px;top:1014px;" width="42" height="42" viewBox="0 0 42 42"><path d="M21 14 L39.5 27 L21 40 L2.5 27z" fill="#cfcfcf" stroke="#111" stroke-width="2.2"/><path d="M21 2.5 L39.5 16 L21 29.5 L2.5 16z" fill="#d4d4d4" stroke="#111" stroke-width="2.2"/><path d="M21 4 L38 16 L21 28 L4 16z" fill="none" stroke="#eee" stroke-width="0.8"/><path d="M27 12.5 L21 8.5 L12 15 L23 22.5 L17 26" fill="none" stroke="#111" stroke-width="2.2"/></svg></div></body></html>
